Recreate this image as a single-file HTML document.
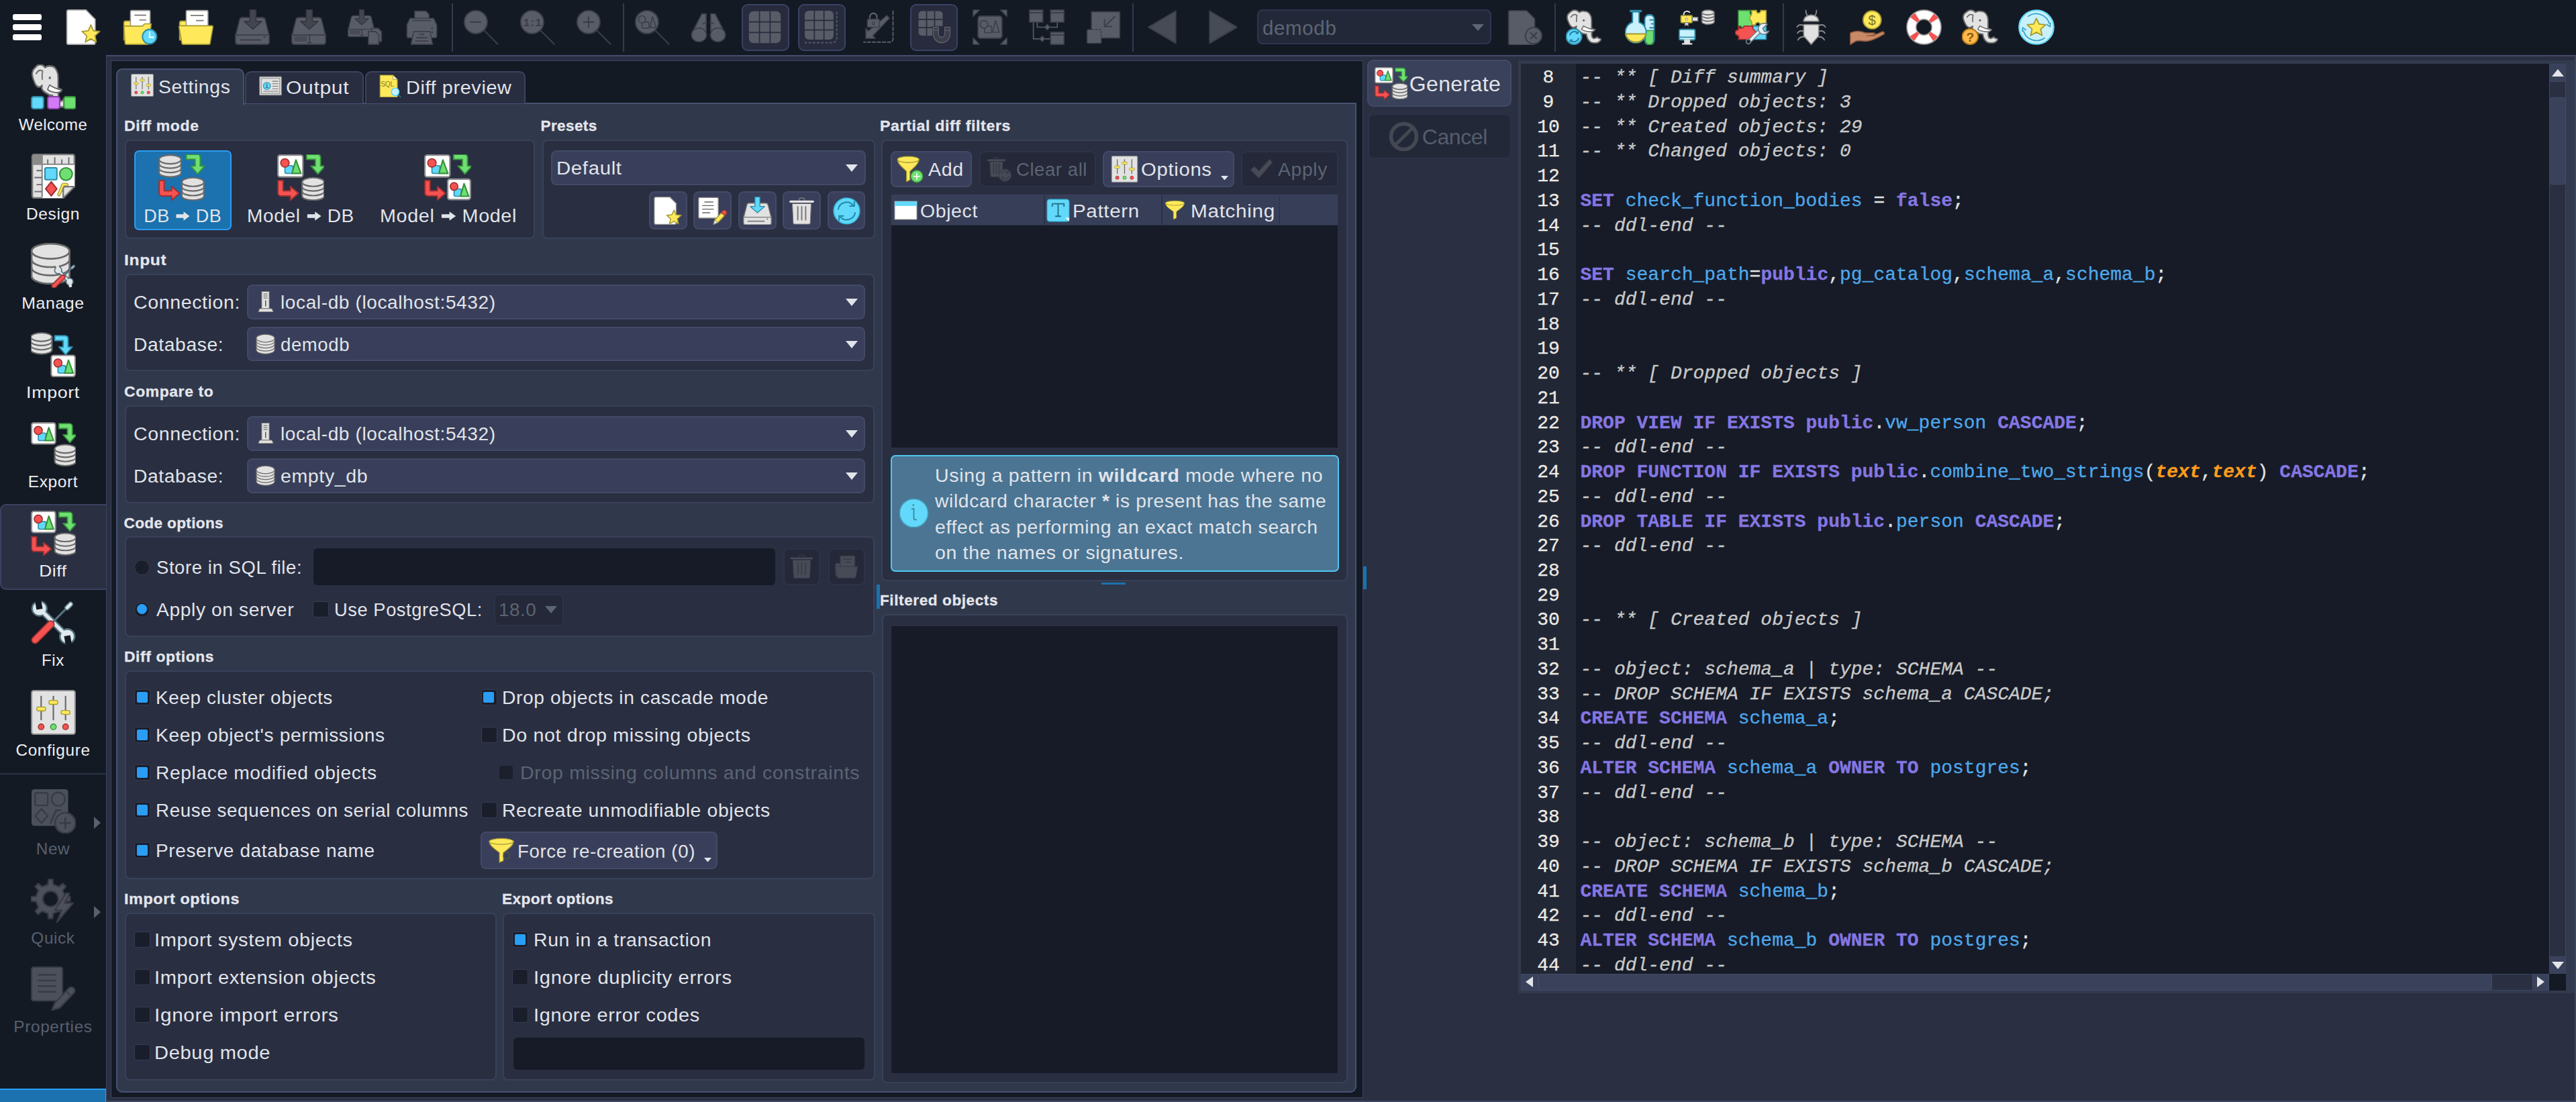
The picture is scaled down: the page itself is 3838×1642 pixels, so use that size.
<!DOCTYPE html><html><head><meta charset="utf-8"><title>pgModeler</title><style>
*{box-sizing:border-box;margin:0;padding:0}
html,body{width:3838px;height:1642px;overflow:hidden;background:#141a24}
body{position:relative;font-family:"Liberation Sans",sans-serif;font-size:27px;color:#e1e4ea;letter-spacing:.6px}
div,svg.ic{position:absolute}
.t{white-space:pre}
.s{font-size:24px;letter-spacing:.3px}
.h{font-size:22.6px;font-weight:700;-webkit-text-stroke:.3px;letter-spacing:0;white-space:pre;color:#e4e6ec}
.dis{color:#5b6473}
.gb{background:#292e41;border:2px solid #394159;border-radius:8px}
.combo{background:#393f5a;border:2px solid #424a66;border-radius:8px}
.dark{background:#171b27;border-radius:6px}
.btn{background:#393f5a;border:2px solid #424a66;border-radius:8px}
.btnd{background:#242838;border:2px solid #2d3348;border-radius:8px}
.cb{width:24px;height:24px;background:#1a1e2b;border:1.5px solid #363c54;border-radius:4px}
.cb.on::after{content:"";position:absolute;left:2.5px;top:2.5px;width:16px;height:16px;background:#2a9df4;border-radius:2px}
.cb.d{border-color:#2b3044;background:#1c202d}
.rb{width:23px;height:23px;background:#1a1e2b;border:1.5px solid #363c54;border-radius:50%}
.rb.on::after{content:"";position:absolute;left:2.5px;top:2.5px;width:15px;height:15px;background:#2a9df4;border-radius:50%}
.arr{width:0;height:0;border-left:9px solid transparent;border-right:9px solid transparent;border-top:11px solid #e1e4ea}
.m{font-family:"Liberation Mono",monospace;font-size:28px;letter-spacing:0;white-space:pre;-webkit-text-stroke:.3px}

.k{color:#8576e2}.i{color:#4ea8ec}.c{color:#c9c9c9}.ty{color:#ff9d1c}
</style></head><body><svg width="0" height="0" style="position:absolute"><defs><symbol id="i-new" viewBox="0 0 64 64"><path d="M2 4a3 3 0 0 1 3-3h32l17 17v42a3 3 0 0 1 -3 3H5a3 3 0 0 1 -3-3z" fill="#fff" stroke="#a8a8a8" stroke-width="2"/><polygon points="46.0,28.0 50.7,38.5 62.2,39.7 53.6,47.5 56.0,58.8 46.0,53.0 36.0,58.8 38.4,47.5 29.8,39.7 41.3,38.5" fill="#ffe95a" stroke="#a39a35" stroke-width="2.2" stroke-linejoin="round"/></symbol><symbol id="i-recent" viewBox="0 0 64 64"><path d="M2 24a3 3 0 0 1 3-3h14l5 5h22a3 3 0 0 1 3 3v26H2z" fill="#ffe95a" stroke="#a39a35" stroke-width="2" stroke-linejoin="round"/><rect x="14" y="2" width="36" height="34" rx="2" fill="#fff" stroke="#9a9a9a" stroke-width="2"/><path d="M21.2 10.5h21.599999999999998M30.2 19.0h12.6" stroke="#777" stroke-width="2"/><path d="M2 30h34l4-4h12l-4 34a3 3 0 0 1 -3 3H7a3 3 0 0 1 -3 -3z" fill="#ffe95a" stroke="#a39a35" stroke-width="2" stroke-linejoin="round"/><circle cx="49" cy="49" r="13" fill="#62d8fa" stroke="#2d8ca8" stroke-width="2.4"/><path d="M49 40v10h8" fill="none" stroke="#fff" stroke-width="2.4"/></symbol><symbol id="i-open" viewBox="0 0 64 64"><path d="M2 24a3 3 0 0 1 3-3h14l5 5h22a3 3 0 0 1 3 3v26H2z" fill="#ffe95a" stroke="#a39a35" stroke-width="2" stroke-linejoin="round"/><rect x="14" y="2" width="40" height="36" rx="2" fill="#fff" stroke="#9a9a9a" stroke-width="2"/><path d="M22.0 11.0h24.0M32.0 20.0h14.0" stroke="#777" stroke-width="2"/><path d="M1 32a2 2 0 0 1 2-2.5h58a2 2 0 0 1 2 2.5l-5 28a3 3 0 0 1 -3 3H9a3 3 0 0 1 -3 -3z" fill="#ffe95a" stroke="#a39a35" stroke-width="2" stroke-linejoin="round"/></symbol><symbol id="i-save" viewBox="0 0 64 64"><rect x="1" y="42" width="62" height="21" rx="4" fill="#585c67" stroke="#3b3e48" stroke-width="2"/><path d="M1.5 46L8.5 18.6a5 5 0 0 1 5-4h37a5 5 0 0 1 5 4L62.5 46z" fill="#585c67" stroke="#3b3e48" stroke-width="2" stroke-linejoin="round"/><path d="M27.5 0.5h11v21.0h10.5l-16 14.0l-16 -14.0h10.5z" fill="#43464f" stroke="#33363f" stroke-width="2" stroke-linejoin="round"/><path d="M10 55h38" stroke="#3b3e48" stroke-width="2.5"/><circle cx="54" cy="50" r="1.6" fill="#3b3e48"/></symbol><symbol id="i-saveas" viewBox="0 0 64 64"><rect x="1" y="42" width="62" height="21" rx="4" fill="#585c67" stroke="#3b3e48" stroke-width="2"/><path d="M1.5 46L8.5 18.6a5 5 0 0 1 5-4h37a5 5 0 0 1 5 4L62.5 46z" fill="#585c67" stroke="#3b3e48" stroke-width="2" stroke-linejoin="round"/><path d="M27.5 0.5h11v21.0h10.5l-16 14.0l-16 -14.0h10.5z" fill="#43464f" stroke="#33363f" stroke-width="2" stroke-linejoin="round"/><rect x="5" y="48" width="24" height="10" fill="#484b55"/><path d="M29.5 46h8M29.5 60h8M33.5 46v14" stroke="#3b3e48" stroke-width="2.2"/></symbol><symbol id="i-saveall" viewBox="0 0 64 64"><g transform="scale(.78)"><rect x="1" y="42" width="62" height="21" rx="4" fill="#585c67" stroke="#3b3e48" stroke-width="2"/><path d="M1.5 46L8.5 18.6a5 5 0 0 1 5-4h37a5 5 0 0 1 5 4L62.5 46z" fill="#585c67" stroke="#3b3e48" stroke-width="2" stroke-linejoin="round"/><path d="M27.5 0.5h11v21.0h10.5l-16 14.0l-16 -14.0h10.5z" fill="#43464f" stroke="#33363f" stroke-width="2" stroke-linejoin="round"/><rect x="5" y="48" width="24" height="10" fill="#484b55"/><path d="M29.5 46h8M29.5 60h8M33.5 46v14" stroke="#3b3e48" stroke-width="2.2"/></g><path d="M44 34h12l6 6v18H44z" fill="#585c67" stroke="#3b3e48" stroke-width="2"/><path d="M38 40h13l6 6v17H38z" fill="#585c67" stroke="#3b3e48" stroke-width="2"/></symbol><symbol id="i-print" viewBox="0 0 64 64"><path d="M18 20V3h22l6 6v11z" fill="#585c67" stroke="#3b3e48" stroke-width="2" stroke-linejoin="round"/><path d="M3 28l6-12h46l6 12v20a3 3 0 0 1 -3 3H6a3 3 0 0 1 -3 -3z" fill="#585c67" stroke="#3b3e48" stroke-width="2" stroke-linejoin="round"/><path d="M14 20h36" stroke="#3b3e48" stroke-width="2"/><circle cx="52" cy="34" r="1.8" fill="#3b3e48"/><circle cx="52" cy="41" r="1.8" fill="#3b3e48"/><path d="M16 40h32l5 23H11z" fill="#585c67" stroke="#3b3e48" stroke-width="2" stroke-linejoin="round"/><path d="M27 45h10M21 51h22M19 57h26" stroke="#3b3e48" stroke-width="2.2"/></symbol><symbol id="i-zout" viewBox="0 0 64 64"><path d="M30 30L63 63" stroke="#3b3e48" stroke-width="2.6"/><circle cx="22" cy="22" r="21" fill="#585c67" stroke="#3b3e48" stroke-width="2.4"/><path d="M12 22h20" stroke="#3b3e48" stroke-width="2.6"/></symbol><symbol id="i-z11" viewBox="0 0 64 64"><path d="M30 30L63 63" stroke="#3b3e48" stroke-width="2.6"/><circle cx="22" cy="22" r="21" fill="#585c67" stroke="#3b3e48" stroke-width="2.4"/><text x="22" y="30" text-anchor="middle" font-family="Liberation Mono" font-weight="700" font-size="20" letter-spacing="-1" fill="#3b3e48">1:1</text></symbol><symbol id="i-zin" viewBox="0 0 64 64"><path d="M30 30L63 63" stroke="#3b3e48" stroke-width="2.6"/><circle cx="22" cy="22" r="21" fill="#585c67" stroke="#3b3e48" stroke-width="2.4"/><path d="M12 22h20M22 12v20" stroke="#3b3e48" stroke-width="2.6"/></symbol><symbol id="i-zobj" viewBox="0 0 64 64"><path d="M30 30L63 63" stroke="#3b3e48" stroke-width="2.6"/><circle cx="22" cy="22" r="21" fill="#585c67" stroke="#3b3e48" stroke-width="2.4"/><rect x="13" y="22" width="13" height="11" rx="2" fill="#585c67" stroke="#3b3e48" stroke-width="2"/><circle cx="13" cy="17" r="6.5" fill="#585c67" stroke="#3b3e48" stroke-width="2"/><path d="M32 12l7 20H28z" fill="#585c67" stroke="#3b3e48" stroke-width="2" stroke-linejoin="round"/></symbol><symbol id="i-bino" viewBox="0 0 64 64"><path d="M20 6h8v34H4z" fill="#585c67" stroke="#3b3e48" stroke-width="2" stroke-linejoin="round"/><path d="M36 6h8l16 34H36z" fill="#585c67" stroke="#3b3e48" stroke-width="2" stroke-linejoin="round"/><circle cx="15" cy="47" r="13.5" fill="#585c67" stroke="#3b3e48" stroke-width="2"/><circle cx="49" cy="47" r="13.5" fill="#585c67" stroke="#3b3e48" stroke-width="2"/><path d="M22 26c4-5 16-5 20 0" fill="none" stroke="#3b3e48" stroke-width="2.2"/><path d="M32 8v30" stroke="#141a24" stroke-width="4"/></symbol><symbol id="i-grid" viewBox="0 0 64 64"><rect x="1" y="1" width="62" height="62" rx="9" fill="#585c67"/><path d="M21.666666666666664 1v62M1 21.666666666666664h62" stroke="#272b3d" stroke-width="2.2"/><path d="M42.33333333333333 1v62M1 42.33333333333333h62" stroke="#272b3d" stroke-width="2.2"/></symbol><symbol id="i-gridd" viewBox="0 0 64 64"><rect x="0" y="0" width="55" height="55" rx="8" fill="#585c67"/><path d="M18.333333333333332 0v55M0 18.333333333333332h55" stroke="#272b3d" stroke-width="2.2"/><path d="M36.666666666666664 0v55M0 36.666666666666664h55" stroke="#272b3d" stroke-width="2.2"/><path d="M61 2v50a9 9 0 0 1 -9 9H0" fill="none" stroke="#585c67" stroke-width="2.2" stroke-dasharray="5 3"/></symbol><symbol id="i-lockarr" viewBox="0 0 64 64"><path d="M62 2v52a6 6 0 0 1 -6 6H4" fill="none" stroke="#585c67" stroke-width="2.6" stroke-dasharray="6 4" stroke-linecap="round"/><path d="M50 10l5 5L22 48l5 5H8V34l5 5z" fill="#585c67" stroke="#3b3e48" stroke-width="2" stroke-linejoin="round"/><path d="M16 18v-5a7 7 0 0 1 14 0v5" fill="none" stroke="#585c67" stroke-width="3"/><rect x="11" y="17" width="24" height="15" rx="2" fill="#585c67" stroke="#3b3e48" stroke-width="2"/><circle cx="23" cy="24.5" r="2.5" fill="none" stroke="#3b3e48" stroke-width="1.6"/></symbol><symbol id="i-gridmag" viewBox="0 0 64 64"><rect x="2" y="2" width="46" height="46" rx="6" fill="#585c67"/><path d="M17.333333333333332 2v46M2 17.333333333333332h46" stroke="#272b3d" stroke-width="2.2"/><path d="M32.666666666666664 2v46M2 32.666666666666664h46" stroke="#272b3d" stroke-width="2.2"/><rect x="28" y="30" width="36" height="34" fill="#272b3d"/><path d="M30 32h10v13a6 6 0 0 0 12 0V32h10v13a16 16 0 0 1 -32 0z" fill="#3b3e48" stroke="#585c67" stroke-width="2" stroke-linejoin="round"/><path d="M30 38h10M52 38h10" stroke="#585c67" stroke-width="2"/></symbol><symbol id="i-fit" viewBox="0 0 64 64"><rect x="10" y="12" width="44" height="40" rx="5" fill="#585c67" stroke="#3b3e48" stroke-width="2.4"/><rect x="22" y="30" width="13" height="12" rx="2" fill="#585c67" stroke="#3b3e48" stroke-width="2"/><circle cx="21" cy="27" r="7" fill="#585c67" stroke="#3b3e48" stroke-width="2"/><path d="M42 20l7 21H37z" fill="#585c67" stroke="#3b3e48" stroke-width="2" stroke-linejoin="round"/><path d="M1 1h12L1 13zM63 1v12L51 1zM1 63V51l12 12zM63 63H51l12-12z" fill="#585c67" stroke="#3b3e48" stroke-width="1.6" stroke-linejoin="round"/></symbol><symbol id="i-rels" viewBox="0 0 64 64"><path d="M15 24v8h36v-8M8 24v29h32" fill="none" stroke="#585c67" stroke-width="2"/><rect x="1" y="1" width="24" height="22" fill="#585c67" stroke="#3b3e48" stroke-width="2"/><path d="M1 6h24" stroke="#3b3e48" stroke-width="2.4"/><rect x="39" y="1" width="24" height="22" fill="#585c67" stroke="#3b3e48" stroke-width="2"/><path d="M39 6h24" stroke="#3b3e48" stroke-width="2.4"/><rect x="39" y="41" width="24" height="22" fill="#585c67" stroke="#3b3e48" stroke-width="2"/><path d="M39 46h24" stroke="#3b3e48" stroke-width="2.4"/><path d="M33 27l5 5l-5 5l-5-5zM24 48l5 5l-5 5l-5-5z" fill="#585c67" stroke="#3b3e48" stroke-width="1.6"/></symbol><symbol id="i-compact" viewBox="0 0 64 64"><rect x="10" y="2" width="52" height="50" fill="#585c67" stroke="#3b3e48" stroke-width="2"/><path d="M54 10L36 28M34 16v14h14" fill="none" stroke="#3b3e48" stroke-width="2.4"/><rect x="2" y="36" width="26" height="26" rx="2" fill="#585c67" stroke="#3b3e48" stroke-width="2" stroke-dasharray="4 2.5"/></symbol><symbol id="i-left" viewBox="0 0 64 64"><path d="M61 3v58L3 32z" fill="#474b56" stroke="#3b3e48" stroke-width="2.4" stroke-linejoin="round"/></symbol><symbol id="i-right" viewBox="0 0 64 64"><path d="M3 3v58L61 32z" fill="#474b56" stroke="#3b3e48" stroke-width="2.4" stroke-linejoin="round"/></symbol><symbol id="i-filex" viewBox="0 0 64 64"><path d="M2 4a3 3 0 0 1 3-3h30l15 15v45a3 3 0 0 1 -3 3H5a3 3 0 0 1 -3-3z" fill="#585c67" stroke="#3b3e48" stroke-width="2"/><circle cx="48" cy="47" r="15" fill="#585c67" stroke="#3b3e48" stroke-width="2.4"/><path d="M42 41l12 12M54 41l-12 12" stroke="#3b3e48" stroke-width="2.6"/></symbol><symbol id="i-elesync" viewBox="0 0 64 64"><g transform="translate(0 1)"><path d="M13.5 .5C18-.5 22 2 24 4.3C27 2.5 30 2 32.5 2.2C37 2.2 41 4 43 7.5C45.5 11 46.2 14 46.2 18L46.2 33L52.5 35.6C51 38 49 39 46.5 39.5L46.5 45C46.5 49 49 52 51.5 51C53.5 50.5 55 49.5 56.3 48.5L58 50.5L63.5 52.4C62 57 57 59.5 53.5 59.5C50 59.5 46 59 43.7 57.3C40 54.5 38.5 51 38 48.9L36.7 43.3C33 43.5 30 42.5 28.3 41.2C23 39 19.5 36.5 18.4 33.5L19.1 29.3C16.5 31.5 14 32 12.1 31.4C9.5 30.5 7.5 28 6.5 25.7C4.5 22 2.8 18 2.3 14.5C2 10 4.5 6 7.9 4C9.5 2 11.5 1 13.5 .5Z" fill="#e2e2e2" stroke="#6a6a6a" stroke-width="2.4" stroke-linejoin="round"/><path d="M9 12.8C11 10 13 8.5 15 8.2C17 8 19 8.5 19.9 9.6C19 13 18.8 17 19.2 20.8" fill="none" stroke="#6a6a6a" stroke-width="2" stroke-linecap="round"/><circle cx="32.1" cy="18.7" r="1.9" fill="#666"/><path d="M31.8 28.6C37 32 44 34.5 52.3 35.3C50 38.5 46 39.6 42 39.2C36 38.5 31 37 28.3 34.9Z" fill="#fff" stroke="#6a6a6a" stroke-width="1.8" stroke-linejoin="round"/></g><circle cx="14.6" cy="49" r="14" fill="#62d8fa" stroke="#2d8ca8" stroke-width="2.4"/><path d="M7 47a8.5 8.5 0 0 1 15-4M23 51a8.5 8.5 0 0 1 -15 4" fill="none" stroke="#1f7fa0" stroke-width="2.4"/><path d="M23 38v6h-6zM7 60v-6h6z" fill="#1f7fa0"/></symbol><symbol id="i-flask" viewBox="0 0 64 64"><rect x="42" y="10" width="20" height="53" rx="8" fill="#c8f1fc" stroke="#2d8ca8" stroke-width="2.8"/><path d="M43.5 38h17v17a8 8 0 0 1 -17 0z" fill="#6ee071" stroke="#38923d" stroke-width="2"/><path d="M52 19h9M55 26h6M52 33h9" stroke="#2d8ca8" stroke-width="2.6"/><path d="M16 4v19a22 19 0 1 0 14 0V4z" fill="#c8f1fc" stroke="#2d8ca8" stroke-width="2.8" stroke-linejoin="round"/><path d="M1.5 44h43a22 19 0 0 1 -43 0z" fill="#ffe95a" stroke="#a39a35" stroke-width="2.4"/><path d="M12 3h22" stroke="#2d8ca8" stroke-width="4.4" stroke-linecap="round"/></symbol><symbol id="i-conn" viewBox="0 0 64 64"><path d="M41.0 5.4v17.200000000000003a11.0 4.4 0 0 0 22 0v-17.200000000000003z" fill="#e2e2e2" stroke="#6a6a6a" stroke-width="2"/><path d="M41.0 11.133333333333335a11.0 4.4 0 0 0 22 0" fill="none" stroke="#6a6a6a" stroke-width="2"/><path d="M41.0 16.866666666666667a11.0 4.4 0 0 0 22 0" fill="none" stroke="#6a6a6a" stroke-width="2"/><ellipse cx="52" cy="5.4" rx="11.0" ry="4.4" fill="#e2e2e2" stroke="#6a6a6a" stroke-width="2"/><path d="M9 14v-5a6 6 0 0 1 11-3" fill="none" stroke="#e2e2e2" stroke-width="2.4"/><rect x="4" y="11" width="20" height="13" rx="2" fill="#ffe95a" stroke="#a39a35" stroke-width="2"/><circle cx="14" cy="17.5" r="2" fill="#fff" stroke="#a39a35" stroke-width="1.2"/><path d="M24 14h10v7H24z" fill="#e2e2e2" stroke="#6a6a6a" stroke-width="1.6"/><path d="M11 24h6v6l-3-2l-3 2z" fill="#e2e2e2" stroke="#6a6a6a" stroke-width="1.2"/><rect x="1" y="36" width="28" height="19" rx="3" fill="#c8f1fc" stroke="#2d8ca8" stroke-width="2.4"/><path d="M1 50h28" stroke="#2d8ca8" stroke-width="2"/><path d="M11 55h8v5h-8zM6 62h18" stroke="#e2e2e2" stroke-width="2.6" fill="#e2e2e2"/></symbol><symbol id="i-puzzle" viewBox="0 0 64 64"><path d="M6 2h22c-3 5 0 9 4 9v19H20c0 5-8 6-9 0H6z" fill="#6ee071" stroke="#38923d" stroke-width="2" stroke-linejoin="round"/><path d="M30 2h9c-2 6 8 6 7 0h10v26H45c1-6-9-6-8 0h-7c2-6-3-9-4-12c0-3 4-5 4-8z" fill="#ffe95a" stroke="#a39a35" stroke-width="2" stroke-linejoin="round"/><path d="M32 30h24v24H32z" fill="#62d8fa" stroke="#2d8ca8" stroke-width="2" stroke-linejoin="round"/><path d="M6 30c2 6 9 5 10 0h16c-3 6 6 8 6 13c0 4-6 4-6 11H6c2-5 1-7-3-8c-4-2-3-9 3-9z" fill="#f55252" stroke="#9d3030" stroke-width="2" stroke-linejoin="round"/><path d="M25 58L47 36" stroke="#6b7d86" stroke-width="8" stroke-linecap="round"/><path d="M25 58L47 36" stroke="#e6eef2" stroke-width="4.5" stroke-linecap="round"/><path d="M58 27a10 10 0 1 0 3 12l-8 1l-3-6z" fill="#e6eef2" stroke="#6b7d86" stroke-width="2" stroke-linejoin="round"/><circle cx="24" cy="58" r="4" fill="#141a24" stroke="#6b7d86" stroke-width="2"/></symbol><symbol id="i-bug" viewBox="0 0 64 64"><path d="M22 2c0 8 2 11 6 13M42 2c0 8-2 11-6 13" fill="none" stroke="#8a8a8a" stroke-width="2.2"/><path d="M18 22a14 11 0 0 1 28 0z" fill="#e2e2e2" stroke="#8a8a8a" stroke-width="2"/><path d="M18 28h28v20l-14 15l-14-15z" fill="#e2e2e2" stroke="#8a8a8a" stroke-width="2" stroke-linejoin="round"/><path d="M18 30c-6-3-10-2-13 3M18 40c-6-2-10 0-12 4M19 50c-6-1-10 1-12 6M46 30c6-3 10-2 13 3M46 40c6-2 10 0 12 4M45 50c6-1 10 1 12 6" fill="none" stroke="#8a8a8a" stroke-width="2.2"/></symbol><symbol id="i-donate" viewBox="0 0 64 64"><circle cx="41" cy="18" r="16.5" fill="#ffe95a" stroke="#a39a35" stroke-width="2.4"/><text x="41" y="27" text-anchor="middle" font-family="Liberation Sans" font-size="25" fill="#7a7325">$</text><path d="M1 42c8-4 18-4 28 0h14c4 0 4 5 0 5h-12c10 1 22-4 28-7c4-1 6 3 2 5c-10 6-22 12-32 12c-8 0-12-2-18 0l-10 6z" fill="#c98a68" stroke="#8f5c40" stroke-width="2" stroke-linejoin="round"/></symbol><symbol id="i-buoy" viewBox="0 0 64 64"><circle cx="32" cy="32" r="22.5" fill="none" stroke="#8a8a8a" stroke-width="19"/><circle cx="32" cy="32" r="22.5" fill="none" stroke="#fff" stroke-width="15"/><circle cx="32" cy="32" r="22.5" fill="none" stroke="#f55252" stroke-width="15" stroke-dasharray="8.4 26.94" stroke-dashoffset="-13.5"/></symbol><symbol id="i-elehelp" viewBox="0 0 64 64"><g transform="translate(0 1)"><path d="M13.5 .5C18-.5 22 2 24 4.3C27 2.5 30 2 32.5 2.2C37 2.2 41 4 43 7.5C45.5 11 46.2 14 46.2 18L46.2 33L52.5 35.6C51 38 49 39 46.5 39.5L46.5 45C46.5 49 49 52 51.5 51C53.5 50.5 55 49.5 56.3 48.5L58 50.5L63.5 52.4C62 57 57 59.5 53.5 59.5C50 59.5 46 59 43.7 57.3C40 54.5 38.5 51 38 48.9L36.7 43.3C33 43.5 30 42.5 28.3 41.2C23 39 19.5 36.5 18.4 33.5L19.1 29.3C16.5 31.5 14 32 12.1 31.4C9.5 30.5 7.5 28 6.5 25.7C4.5 22 2.8 18 2.3 14.5C2 10 4.5 6 7.9 4C9.5 2 11.5 1 13.5 .5Z" fill="#e2e2e2" stroke="#6a6a6a" stroke-width="2.4" stroke-linejoin="round"/><path d="M9 12.8C11 10 13 8.5 15 8.2C17 8 19 8.5 19.9 9.6C19 13 18.8 17 19.2 20.8" fill="none" stroke="#6a6a6a" stroke-width="2" stroke-linecap="round"/><circle cx="32.1" cy="18.7" r="1.9" fill="#666"/><path d="M31.8 28.6C37 32 44 34.5 52.3 35.3C50 38.5 46 39.6 42 39.2C36 38.5 31 37 28.3 34.9Z" fill="#fff" stroke="#6a6a6a" stroke-width="1.8" stroke-linejoin="round"/></g><circle cx="14.6" cy="49" r="14" fill="#ffb84d" stroke="#b07614" stroke-width="2.4"/><text x="15" y="58" text-anchor="middle" font-family="Liberation Sans" font-weight="700" font-size="23" fill="#8a5a0c">?</text></symbol><symbol id="i-starc" viewBox="0 0 64 64"><circle cx="32" cy="32" r="30.5" fill="#c8f1fc" stroke="#62d8fa" stroke-width="2.6"/><path d="M9 38a24 24 0 0 0 38 13M55 26a24 24 0 0 0 -38-13" fill="none" stroke="#3ba6c6" stroke-width="2.2"/><path d="M7 40l1-7l6 4M57 24l-1 7l-6-4" fill="none" stroke="#3ba6c6" stroke-width="2.2"/><polygon points="32.0,16.0 36.7,26.5 48.2,27.7 39.6,35.5 42.0,46.8 32.0,41.0 22.0,46.8 24.4,35.5 15.8,27.7 27.3,26.5" fill="#ffe95a" stroke="#a39a35" stroke-width="2.2" stroke-linejoin="round"/></symbol><symbol id="s-welcome" viewBox="0 0 64 64"><g transform="scale(.84 1.02)"><path d="M13.5 .5C18-.5 22 2 24 4.3C27 2.5 30 2 32.5 2.2C37 2.2 41 4 43 7.5C45.5 11 46.2 14 46.2 18L46.2 33L52.5 35.6C51 38 49 39 46.5 39.5L46.5 45C46.5 49 49 52 51.5 51C53.5 50.5 55 49.5 56.3 48.5L58 50.5L63.5 52.4C62 57 57 59.5 53.5 59.5C50 59.5 46 59 43.7 57.3C40 54.5 38.5 51 38 48.9L36.7 43.3C33 43.5 30 42.5 28.3 41.2C23 39 19.5 36.5 18.4 33.5L19.1 29.3C16.5 31.5 14 32 12.1 31.4C9.5 30.5 7.5 28 6.5 25.7C4.5 22 2.8 18 2.3 14.5C2 10 4.5 6 7.9 4C9.5 2 11.5 1 13.5 .5Z" fill="#e2e2e2" stroke="#6a6a6a" stroke-width="2.4" stroke-linejoin="round"/><path d="M9 12.8C11 10 13 8.5 15 8.2C17 8 19 8.5 19.9 9.6C19 13 18.8 17 19.2 20.8" fill="none" stroke="#6a6a6a" stroke-width="2" stroke-linecap="round"/><circle cx="32.1" cy="18.7" r="1.9" fill="#666"/><path d="M31.8 28.6C37 32 44 34.5 52.3 35.3C50 38.5 46 39.6 42 39.2C36 38.5 31 37 28.3 34.9Z" fill="#fff" stroke="#6a6a6a" stroke-width="1.8" stroke-linejoin="round"/></g><rect x="1" y="46" width="17" height="17" rx="3" fill="#62d8fa" stroke="#2d8ca8" stroke-width="2"/><rect x="24" y="46" width="17" height="17" rx="3" fill="#d47af7" stroke="#8a45a8" stroke-width="2"/><rect x="47" y="46" width="17" height="17" rx="3" fill="#6ee071" stroke="#38923d" stroke-width="2"/></symbol><symbol id="s-design" viewBox="0 0 64 64"><path d="M2 4a3 3 0 0 1 3-3h54a3 3 0 0 1 3 3v42L46 63H5a3 3 0 0 1 -3-3z" fill="#e2e2e2" stroke="#777" stroke-width="2.4" stroke-linejoin="round"/><rect x="16" y="15" width="46" height="31" fill="#fff"/><path d="M16 46h30v17H16z" fill="#fff"/><path d="M16 2v60M2 15h60" stroke="#888" stroke-width="2"/><rect x="3" y="2" width="13" height="13" fill="#8a8a8a"/><path d="M24 8v7M34 5v10M44 8v7M54 5v10M8 24h8M5 34h11M8 44h8M5 54h11" stroke="#777" stroke-width="2"/><rect x="20" y="20" width="17" height="17" rx="2" fill="#62d8fa" stroke="#2d8ca8" stroke-width="2"/><circle cx="50" cy="29" r="9" fill="#6ee071" stroke="#38923d" stroke-width="2"/><path d="M29 40l8 10l-8 10l-8-10z" fill="#f55252" stroke="#9d3030" stroke-width="2" stroke-linejoin="round"/><path d="M40 58l6-14h5" fill="none" stroke="#a39a35" stroke-width="5" stroke-linecap="round" stroke-linejoin="round"/><path d="M40 58l6-14h5" fill="none" stroke="#ffe95a" stroke-width="2.4" stroke-linecap="round" stroke-linejoin="round"/><path d="M46 63V50a3 3 0 0 1 3-3h13z" fill="#e2e2e2" stroke="#777" stroke-width="2.2" stroke-linejoin="round"/></symbol><symbol id="s-import" viewBox="0 0 64 64"><path d="M0.0 7.0v18.0a15.0 6.0 0 0 0 30 0v-18.0z" fill="#e2e2e2" stroke="#6a6a6a" stroke-width="2"/><path d="M0.0 13.0a15.0 6.0 0 0 0 30 0" fill="none" stroke="#6a6a6a" stroke-width="2"/><path d="M0.0 19.0a15.0 6.0 0 0 0 30 0" fill="none" stroke="#6a6a6a" stroke-width="2"/><ellipse cx="15" cy="7.0" rx="15.0" ry="6.0" fill="#e2e2e2" stroke="#6a6a6a" stroke-width="2"/><path transform="translate(34 5) scale(1.0)" d="M0 0h15a4 4 0 0 1 4 4v12h6l-9.5 11l-9.5 -11h6v-9h-12z" fill="#62d8fa" stroke="#2d8ca8" stroke-width="1.8" stroke-linejoin="round"/><rect x="29" y="33" width="34" height="30" rx="3" fill="#fff" stroke="#8a8a8a" stroke-width="2"/><rect x="38.52" y="47.4" width="10.88" height="10.799999999999999" rx="2" fill="#62d8fa" stroke="#2d8ca8" stroke-width="1.5"/><circle cx="38.52" cy="43.8" r="5.78" fill="#f55252" stroke="#9d3030" stroke-width="1.5"/><path d="M53.480000000000004 39.6l6.800000000000001 18.6h-12.24z" fill="#6ee071" stroke="#38923d" stroke-width="2" stroke-linejoin="round"/></symbol><symbol id="s-export" viewBox="0 0 64 64"><rect x="1" y="2" width="34" height="30" rx="3" fill="#fff" stroke="#8a8a8a" stroke-width="2"/><rect x="10.520000000000001" y="16.4" width="10.88" height="10.799999999999999" rx="2" fill="#62d8fa" stroke="#2d8ca8" stroke-width="1.5"/><circle cx="10.520000000000001" cy="12.799999999999999" r="5.78" fill="#f55252" stroke="#9d3030" stroke-width="1.5"/><path d="M25.48 8.6l6.800000000000001 18.6h-12.24z" fill="#6ee071" stroke="#38923d" stroke-width="2" stroke-linejoin="round"/><path transform="translate(40 3) scale(1.0)" d="M0 0h15a4 4 0 0 1 4 4v12h6l-9.5 11l-9.5 -11h6v-9h-12z" fill="#6ee071" stroke="#38923d" stroke-width="1.8" stroke-linejoin="round"/><path d="M34.0 39.0v18.0a15.0 6.0 0 0 0 30 0v-18.0z" fill="#e2e2e2" stroke="#6a6a6a" stroke-width="2"/><path d="M34.0 45.0a15.0 6.0 0 0 0 30 0" fill="none" stroke="#6a6a6a" stroke-width="2"/><path d="M34.0 51.0a15.0 6.0 0 0 0 30 0" fill="none" stroke="#6a6a6a" stroke-width="2"/><ellipse cx="49" cy="39.0" rx="15.0" ry="6.0" fill="#e2e2e2" stroke="#6a6a6a" stroke-width="2"/></symbol><symbol id="s-diff" viewBox="0 0 64 64"><rect x="1" y="1" width="34" height="30" rx="3" fill="#fff" stroke="#8a8a8a" stroke-width="2"/><rect x="10.520000000000001" y="15.399999999999999" width="10.88" height="10.799999999999999" rx="2" fill="#62d8fa" stroke="#2d8ca8" stroke-width="1.5"/><circle cx="10.520000000000001" cy="11.799999999999999" r="5.78" fill="#f55252" stroke="#9d3030" stroke-width="1.5"/><path d="M25.48 7.6l6.800000000000001 18.6h-12.24z" fill="#6ee071" stroke="#38923d" stroke-width="2" stroke-linejoin="round"/><path transform="translate(40 2) scale(1.0)" d="M0 0h15a4 4 0 0 1 4 4v12h6l-9.5 11l-9.5 -11h6v-9h-12z" fill="#6ee071" stroke="#38923d" stroke-width="1.8" stroke-linejoin="round"/><path transform="translate(1 37) scale(1.0)" d="M0 0h7v14h10v-6l11 9.5l-11 9.5v-6h-13a4 4 0 0 1 -4 -4z" fill="#f55252" stroke="#9d3030" stroke-width="1.8" stroke-linejoin="round"/><path d="M34.0 38.0v19.0a15.0 6.0 0 0 0 30 0v-19.0z" fill="#e2e2e2" stroke="#6a6a6a" stroke-width="2"/><path d="M34.0 44.333333333333336a15.0 6.0 0 0 0 30 0" fill="none" stroke="#6a6a6a" stroke-width="2"/><path d="M34.0 50.666666666666664a15.0 6.0 0 0 0 30 0" fill="none" stroke="#6a6a6a" stroke-width="2"/><ellipse cx="49" cy="38.0" rx="15.0" ry="6.0" fill="#e2e2e2" stroke="#6a6a6a" stroke-width="2"/></symbol><symbol id="s-fix" viewBox="0 0 64 64"><g transform="translate(32 32) rotate(45)"><rect x="-28" y="-3.5" width="56" height="7" fill="#dfe9ee" stroke="#54727e" stroke-width="2.2"/><circle cx="-28" cy="0" r="10.5" fill="#dfe9ee" stroke="#54727e" stroke-width="2.2"/><circle cx="28" cy="0" r="10.5" fill="#dfe9ee" stroke="#54727e" stroke-width="2.2"/><rect x="-19.6" y="-2.4" width="10.5" height="4.8" fill="#dfe9ee"/><rect x="9.099999999999998" y="-2.4" width="10.5" height="4.8" fill="#dfe9ee"/><rect x="-41.5" y="-4.41" width="14.5" height="8.82" fill="#141a24" transform="rotate(35 -28 0)"/><rect x="27" y="-4.41" width="14.5" height="8.82" fill="#141a24" transform="rotate(35 28 0)"/></g><path d="M51.45 11.100000000000001L28.22 34.56" stroke="#54727e" stroke-width="3" stroke-linecap="round"/><path d="M56.5 6L51.45 11.100000000000001" stroke="#54727e" stroke-width="7.6" stroke-linecap="round"/><path d="M56.5 6L51.45 11.100000000000001" stroke="#dfe9ee" stroke-width="4.3999999999999995" stroke-linecap="round"/><path d="M28.22 34.56L6 57" stroke="#9d3030" stroke-width="11.2" stroke-linecap="round"/><path d="M28.22 34.56L6 57" stroke="#f55252" stroke-width="8" stroke-linecap="round"/></symbol><symbol id="s-manage" viewBox="0 0 64 64"><path d="M1.0 11.8v35.400000000000006a27.0 10.8 0 0 0 54 0v-35.400000000000006z" fill="#e2e2e2" stroke="#6a6a6a" stroke-width="2.6"/><path d="M1.0 23.6a27.0 10.8 0 0 0 54 0" fill="none" stroke="#6a6a6a" stroke-width="2.6"/><path d="M1.0 35.400000000000006a27.0 10.8 0 0 0 54 0" fill="none" stroke="#6a6a6a" stroke-width="2.6"/><ellipse cx="28" cy="11.8" rx="27.0" ry="10.8" fill="#e2e2e2" stroke="#6a6a6a" stroke-width="2.6"/><circle cx="47" cy="47" r="17" fill="#e2e2e2" opacity="0"/><g transform="translate(47 47) rotate(45)"><rect x="-11.5" y="-2.0" width="23.0" height="4" fill="#dfe9ee" stroke="#54727e" stroke-width="1.6"/><circle cx="-11.5" cy="0" r="5" fill="#dfe9ee" stroke="#54727e" stroke-width="1.6"/><circle cx="11.5" cy="0" r="5" fill="#dfe9ee" stroke="#54727e" stroke-width="1.6"/><rect x="-7.5" y="-1.2" width="5" height="2.4" fill="#dfe9ee"/><rect x="2.5" y="-1.2" width="5" height="2.4" fill="#dfe9ee"/><rect x="-19.5" y="-2.1" width="9" height="4.2" fill="#e2e2e2" transform="rotate(35 -11.5 0)"/><rect x="10.5" y="-2.1" width="9" height="4.2" fill="#e2e2e2" transform="rotate(35 11.5 0)"/></g><path d="M58.2 35.8L45.32 48.68" stroke="#54727e" stroke-width="2" stroke-linecap="round"/><path d="M61 33L58.2 35.8" stroke="#54727e" stroke-width="4.2749999999999995" stroke-linecap="round"/><path d="M61 33L58.2 35.8" stroke="#dfe9ee" stroke-width="1.0749999999999993" stroke-linecap="round"/><path d="M45.32 48.68L33 61" stroke="#9d3030" stroke-width="7.7" stroke-linecap="round"/><path d="M45.32 48.68L33 61" stroke="#f55252" stroke-width="4.5" stroke-linecap="round"/></symbol><symbol id="s-config" viewBox="0 0 64 64"><rect x="1" y="1" width="62" height="62" rx="3" fill="#e2e2e2" stroke="#8b8b8b" stroke-width="2"/><path d="M14.64 8.44V43.160000000000004" stroke="#666" stroke-width="2"/><rect x="8.440000000000001" y="24.25" width="12.4" height="5.58" rx="2" fill="#ffe95a" stroke="#a39a35" stroke-width="1.3"/><circle cx="14.64" cy="52.46" r="4.03" fill="#f55252" stroke="#9d3030" stroke-width="1.3"/><path d="M32.0 8.44V43.160000000000004" stroke="#666" stroke-width="2"/><rect x="25.8" y="14.950000000000003" width="12.4" height="5.58" rx="2" fill="#ffe95a" stroke="#a39a35" stroke-width="1.3"/><circle cx="32.0" cy="52.46" r="4.03" fill="#6ee071" stroke="#38923d" stroke-width="1.3"/><path d="M49.36 8.44V43.160000000000004" stroke="#666" stroke-width="2"/><rect x="43.16" y="29.21" width="12.4" height="5.58" rx="2" fill="#ffe95a" stroke="#a39a35" stroke-width="1.3"/><circle cx="49.36" cy="52.46" r="4.03" fill="#f55252" stroke="#9d3030" stroke-width="1.3"/></symbol><symbol id="s-new" viewBox="0 0 64 64"><rect x="1" y="1" width="52" height="52" rx="4" fill="#4c505b"/><rect x="6" y="6" width="18" height="18" rx="2" fill="none" stroke="#383b45" stroke-width="2.2"/><circle cx="39" cy="15" r="9.5" fill="none" stroke="#383b45" stroke-width="2.2"/><path d="M15 29l9 10l-9 10l-9-10z" fill="none" stroke="#383b45" stroke-width="2.2" stroke-linejoin="round"/><path d="M28 49l8-18h6" fill="none" stroke="#383b45" stroke-width="2.6" stroke-linecap="round"/><circle cx="49" cy="49" r="14.5" fill="#4c505b" stroke="#383b45" stroke-width="2.4"/><path d="M41 49h16M49 41v16" stroke="#383b45" stroke-width="2.4"/></symbol><symbol id="s-quick" viewBox="0 0 64 64"><path d="M48.7 26.4L55.8 26.9L55.8 33.1L48.7 33.6L45.2 42.1L49.9 47.5L45.5 51.9L40.1 47.2L31.6 50.7L31.1 57.8L24.9 57.8L24.4 50.7L15.9 47.2L10.5 51.9L6.1 47.5L10.8 42.1L7.3 33.6L0.2 33.1L0.2 26.9L7.3 26.4L10.8 17.9L6.1 12.5L10.5 8.1L15.9 12.8L24.4 9.3L24.9 2.2L31.1 2.2L31.6 9.3L40.1 12.8L45.5 8.1L49.9 12.5L45.2 17.9z" fill="#4c505b" stroke="#383b45" stroke-width="2.2" stroke-linejoin="round"/><circle cx="28" cy="30" r="11" fill="#141a24" stroke="#383b45" stroke-width="2.2"/><path d="M50 22L34 46h10l-7 17l23-27H48l7-14z" fill="#4c505b" stroke="#383b45" stroke-width="2.2" stroke-linejoin="round"/></symbol><symbol id="s-props" viewBox="0 0 64 64"><rect x="1" y="1" width="44" height="48" rx="3" fill="#4c505b" stroke="#383b45" stroke-width="2"/><path d="M10 12h26M10 20h26M10 28h26M10 36h26" stroke="#383b45" stroke-width="2.4"/><path d="M30 62l4-10l20-21a4 4 0 0 1 7 7L41 59z" fill="#4c505b" stroke="#383b45" stroke-width="2.2" stroke-linejoin="round"/><path d="M50 35l7 7" stroke="#383b45" stroke-width="2"/></symbol><symbol id="t-settings" viewBox="0 0 64 64"><rect x="1" y="1" width="62" height="62" rx="3" fill="#e2e2e2" stroke="#8b8b8b" stroke-width="2"/><path d="M14.64 8.44V43.160000000000004" stroke="#666" stroke-width="2"/><rect x="8.440000000000001" y="24.25" width="12.4" height="5.58" rx="2" fill="#ffe95a" stroke="#a39a35" stroke-width="1.3"/><circle cx="14.64" cy="52.46" r="4.03" fill="#f55252" stroke="#9d3030" stroke-width="1.3"/><path d="M32.0 8.44V43.160000000000004" stroke="#666" stroke-width="2"/><rect x="25.8" y="14.950000000000003" width="12.4" height="5.58" rx="2" fill="#ffe95a" stroke="#a39a35" stroke-width="1.3"/><circle cx="32.0" cy="52.46" r="4.03" fill="#6ee071" stroke="#38923d" stroke-width="1.3"/><path d="M49.36 8.44V43.160000000000004" stroke="#666" stroke-width="2"/><rect x="43.16" y="29.21" width="12.4" height="5.58" rx="2" fill="#ffe95a" stroke="#a39a35" stroke-width="1.3"/><circle cx="49.36" cy="52.46" r="4.03" fill="#f55252" stroke="#9d3030" stroke-width="1.3"/></symbol><symbol id="t-output" viewBox="0 0 64 64"><rect x="1" y="6" width="62" height="52" rx="2" fill="#e2e2e2" stroke="#777" stroke-width="2.4"/><rect x="6" y="11" width="52" height="42" fill="none" stroke="#777" stroke-width="1.6"/><circle cx="22" cy="32" r="10" fill="#62d8fa" stroke="#2d8ca8" stroke-width="2"/><text x="22" y="38" text-anchor="middle" font-family="Liberation Mono" font-weight="700" font-size="16" fill="#1f6f88">i</text><path d="M37 19h17M37 26h17M37 33h17M37 40h17M12 47h42" stroke="#777" stroke-width="2"/></symbol><symbol id="t-sql" viewBox="0 0 64 64"><path d="M4 2h36l12 12v48H4z" fill="#ffe95a" stroke="#a39a35" stroke-width="2"/><path d="M40 2v12h12z" fill="#f2f2f2" stroke="#a39a35" stroke-width="1.6" stroke-linejoin="round"/><text x="6" y="34" font-family="Liberation Sans" font-size="19" fill="#8a7f20" letter-spacing="-0.5">SQL</text><path d="M52 54l10 9" stroke="#2b7f96" stroke-width="2.6"/><circle cx="46" cy="48" r="10.5" fill="#c8f1fc" stroke="#62d8fa" stroke-width="3"/></symbol><symbol id="d-dbdb" viewBox="0 0 64 64"><path d="M1.0 7.0v18.0a15.0 6.0 0 0 0 30 0v-18.0z" fill="#e2e2e2" stroke="#6a6a6a" stroke-width="2"/><path d="M1.0 13.0a15.0 6.0 0 0 0 30 0" fill="none" stroke="#6a6a6a" stroke-width="2"/><path d="M1.0 19.0a15.0 6.0 0 0 0 30 0" fill="none" stroke="#6a6a6a" stroke-width="2"/><ellipse cx="16" cy="7.0" rx="15.0" ry="6.0" fill="#e2e2e2" stroke="#6a6a6a" stroke-width="2"/><path transform="translate(38 0) scale(1.0)" d="M0 0h15a4 4 0 0 1 4 4v12h6l-9.5 11l-9.5 -11h6v-9h-12z" fill="#6ee071" stroke="#38923d" stroke-width="1.8" stroke-linejoin="round"/><path transform="translate(1 36) scale(1.0)" d="M0 0h7v14h10v-6l11 9.5l-11 9.5v-6h-13a4 4 0 0 1 -4 -4z" fill="#f55252" stroke="#9d3030" stroke-width="1.8" stroke-linejoin="round"/><path d="M32.0 38.0v19.0a15.0 6.0 0 0 0 30 0v-19.0z" fill="#e2e2e2" stroke="#6a6a6a" stroke-width="2"/><path d="M32.0 44.333333333333336a15.0 6.0 0 0 0 30 0" fill="none" stroke="#6a6a6a" stroke-width="2"/><path d="M32.0 50.666666666666664a15.0 6.0 0 0 0 30 0" fill="none" stroke="#6a6a6a" stroke-width="2"/><ellipse cx="47" cy="38.0" rx="15.0" ry="6.0" fill="#e2e2e2" stroke="#6a6a6a" stroke-width="2"/></symbol><symbol id="d-mdb" viewBox="0 0 64 64"><rect x="1" y="1" width="34" height="30" rx="3" fill="#fff" stroke="#8a8a8a" stroke-width="2"/><rect x="10.520000000000001" y="15.399999999999999" width="10.88" height="10.799999999999999" rx="2" fill="#62d8fa" stroke="#2d8ca8" stroke-width="1.5"/><circle cx="10.520000000000001" cy="11.799999999999999" r="5.78" fill="#f55252" stroke="#9d3030" stroke-width="1.5"/><path d="M25.48 7.6l6.800000000000001 18.6h-12.24z" fill="#6ee071" stroke="#38923d" stroke-width="2" stroke-linejoin="round"/><path transform="translate(40 0) scale(1.0)" d="M0 0h15a4 4 0 0 1 4 4v12h6l-9.5 11l-9.5 -11h6v-9h-12z" fill="#6ee071" stroke="#38923d" stroke-width="1.8" stroke-linejoin="round"/><path transform="translate(1 36) scale(1.0)" d="M0 0h7v14h10v-6l11 9.5l-11 9.5v-6h-13a4 4 0 0 1 -4 -4z" fill="#f55252" stroke="#9d3030" stroke-width="1.8" stroke-linejoin="round"/><path d="M34.0 38.0v19.0a15.0 6.0 0 0 0 30 0v-19.0z" fill="#e2e2e2" stroke="#6a6a6a" stroke-width="2"/><path d="M34.0 44.333333333333336a15.0 6.0 0 0 0 30 0" fill="none" stroke="#6a6a6a" stroke-width="2"/><path d="M34.0 50.666666666666664a15.0 6.0 0 0 0 30 0" fill="none" stroke="#6a6a6a" stroke-width="2"/><ellipse cx="49" cy="38.0" rx="15.0" ry="6.0" fill="#e2e2e2" stroke="#6a6a6a" stroke-width="2"/></symbol><symbol id="d-mm" viewBox="0 0 64 64"><rect x="1" y="1" width="34" height="30" rx="3" fill="#fff" stroke="#8a8a8a" stroke-width="2"/><rect x="10.520000000000001" y="15.399999999999999" width="10.88" height="10.799999999999999" rx="2" fill="#62d8fa" stroke="#2d8ca8" stroke-width="1.5"/><circle cx="10.520000000000001" cy="11.799999999999999" r="5.78" fill="#f55252" stroke="#9d3030" stroke-width="1.5"/><path d="M25.48 7.6l6.800000000000001 18.6h-12.24z" fill="#6ee071" stroke="#38923d" stroke-width="2" stroke-linejoin="round"/><path transform="translate(40 0) scale(1.0)" d="M0 0h15a4 4 0 0 1 4 4v12h6l-9.5 11l-9.5 -11h6v-9h-12z" fill="#6ee071" stroke="#38923d" stroke-width="1.8" stroke-linejoin="round"/><path transform="translate(1 36) scale(1.0)" d="M0 0h7v14h10v-6l11 9.5l-11 9.5v-6h-13a4 4 0 0 1 -4 -4z" fill="#f55252" stroke="#9d3030" stroke-width="1.8" stroke-linejoin="round"/><rect x="32" y="34" width="31" height="28" rx="3" fill="#fff" stroke="#8a8a8a" stroke-width="2"/><rect x="40.68" y="47.44" width="9.92" height="10.08" rx="2" fill="#62d8fa" stroke="#2d8ca8" stroke-width="1.5"/><circle cx="40.68" cy="44.08" r="5.2700000000000005" fill="#f55252" stroke="#9d3030" stroke-width="1.5"/><path d="M54.32 40.16l6.2 17.36h-11.16z" fill="#6ee071" stroke="#38923d" stroke-width="2" stroke-linejoin="round"/></symbol><symbol id="p-new" viewBox="0 0 64 64"><path d="M1 4a3 3 0 0 1 3-3h32l14 14v44a3 3 0 0 1 -3 3H4a3 3 0 0 1 -3-3z" fill="#fff" stroke="#8a8a8a" stroke-width="2"/><polygon points="45.0,30.0 49.7,40.5 61.2,41.7 52.6,49.5 55.0,60.8 45.0,55.0 35.0,60.8 37.4,49.5 28.8,41.7 40.3,40.5" fill="#ffe95a" stroke="#a39a35" stroke-width="2.2" stroke-linejoin="round"/></symbol><symbol id="p-edit" viewBox="0 0 64 64"><rect x="1" y="2" width="44" height="46" rx="2" fill="#fff" stroke="#8a8a8a" stroke-width="2"/><path d="M14 12h20M9 20h26M9 28h26M9 36h18" stroke="#666" stroke-width="2"/><path d="M34 62l3-10l18-19a4 4 0 0 1 7 6L44 58z" fill="#ffe95a" stroke="#a39a35" stroke-width="2" stroke-linejoin="round"/><path d="M52 36l7 6l3-4a4 4 0 0 0 -7-6z" fill="#f55252" stroke="#9d3030" stroke-width="1.6" stroke-linejoin="round"/><path d="M34 62l3-10l7 6z" fill="#eee" stroke="#777" stroke-width="1.4" stroke-linejoin="round"/></symbol><symbol id="p-save" viewBox="0 0 64 64"><rect x="1" y="42" width="62" height="21" rx="4" fill="#e2e2e2" stroke="#7a7a7a" stroke-width="2"/><path d="M1.5 46L8.5 18.6a5 5 0 0 1 5-4h37a5 5 0 0 1 5 4L62.5 46z" fill="#e2e2e2" stroke="#7a7a7a" stroke-width="2" stroke-linejoin="round"/><path d="M26.5 1h11v21.0h10.5l-16 14.0l-16 -14.0h10.5z" fill="#62d8fa" stroke="#2d8ca8" stroke-width="2" stroke-linejoin="round"/><path d="M10 55h38" stroke="#7a7a7a" stroke-width="2.5"/><circle cx="54" cy="50" r="1.6" fill="#7a7a7a"/></symbol><symbol id="p-trash" viewBox="0 0 64 64"><path d="M25.84 9.8v-3.48a3 3 0 0 1 3-3h6.32a3 3 0 0 1 3 3v3.48" fill="none" stroke="#7a7a7a" stroke-width="2"/><path d="M7 10.96h50" stroke="#e2e2e2" stroke-width="5" stroke-linecap="round"/><path d="M11 15.600000000000001h42l-2 42.92a3 3 0 0 1 -3 3h-32a3 3 0 0 1 -3 -3z" fill="#e2e2e2" stroke="#7a7a7a" stroke-width="1.5"/><path d="M23.2 22.56v29.0" stroke="#7a7a7a" stroke-width="3" stroke-linecap="round"/><path d="M32.0 22.56v29.0" stroke="#7a7a7a" stroke-width="3" stroke-linecap="round"/><path d="M40.8 22.56v29.0" stroke="#7a7a7a" stroke-width="3" stroke-linecap="round"/></symbol><symbol id="p-refresh" viewBox="0 0 64 64"><circle cx="32" cy="32" r="29" fill="#62d8fa" stroke="#35b5da" stroke-width="2.4"/><path d="M13 29a19 19 0 0 1 34-9M51 35a19 19 0 0 1 -34 9" fill="none" stroke="#2289aa" stroke-width="3"/><path d="M49 10v11h-11M15 54v-11h11" fill="none" stroke="#2289aa" stroke-width="3"/></symbol><symbol id="c-server" viewBox="0 0 64 64"><rect x="20" y="2" width="22" height="50" fill="#e2e2e2" stroke="#8a8a8a" stroke-width="2"/><path d="M25 9h12M25 15h12M25 21h12" stroke="#555" stroke-width="2.4"/><rect x="30" y="28" width="3" height="18" fill="#555"/><path d="M10 62l4-9h36l4 9z" fill="#e2e2e2" stroke="#8a8a8a" stroke-width="2" stroke-linejoin="round"/></symbol><symbol id="c-db" viewBox="0 0 64 64"><path d="M4.0 15.200000000000001v33.599999999999994a28.0 11.200000000000001 0 0 0 56 0v-33.599999999999994z" fill="#e2e2e2" stroke="#6a6a6a" stroke-width="2.4"/><path d="M4.0 23.6a28.0 11.200000000000001 0 0 0 56 0" fill="none" stroke="#6a6a6a" stroke-width="2.4"/><path d="M4.0 32.0a28.0 11.200000000000001 0 0 0 56 0" fill="none" stroke="#6a6a6a" stroke-width="2.4"/><path d="M4.0 40.4a28.0 11.200000000000001 0 0 0 56 0" fill="none" stroke="#6a6a6a" stroke-width="2.4"/><ellipse cx="32" cy="15.200000000000001" rx="28.0" ry="11.200000000000001" fill="#e2e2e2" stroke="#6a6a6a" stroke-width="2.4"/></symbol><symbol id="g-trash" viewBox="0 0 64 64"><path d="M25.28 8.9v-3.54a3 3 0 0 1 3-3h7.440000000000001a3 3 0 0 1 3 3v3.54" fill="none" stroke="#383b46" stroke-width="2"/><path d="M5 10.08h54" stroke="#474b57" stroke-width="5" stroke-linecap="round"/><path d="M9 14.8h46l-2 43.66a3 3 0 0 1 -3 3h-36a3 3 0 0 1 -3 -3z" fill="#474b57" stroke="#383b46" stroke-width="1.5"/><path d="M22.4 21.88v29.5" stroke="#383b46" stroke-width="3" stroke-linecap="round"/><path d="M32.0 21.88v29.5" stroke="#383b46" stroke-width="3" stroke-linecap="round"/><path d="M41.599999999999994 21.88v29.5" stroke="#383b46" stroke-width="3" stroke-linecap="round"/></symbol><symbol id="g-folder" viewBox="0 0 64 64"><path d="M4 26a3 3 0 0 1 3-3h12l5 5h20a3 3 0 0 1 3 3v24H4z" fill="#474b57" stroke="#383b46" stroke-width="2"/><rect x="16" y="4" width="38" height="34" rx="2" fill="#474b57" stroke="#383b46" stroke-width="2"/><path d="M24 12h22M30 20h14" stroke="#383b46" stroke-width="2.4"/><path d="M3 34a2 2 0 0 1 2-2.5h54a2 2 0 0 1 2 2.5l-5 24a3 3 0 0 1 -3 3H11a3 3 0 0 1 -3 -3z" fill="#474b57" stroke="#383b46" stroke-width="2"/></symbol><symbol id="f-funnel" viewBox="0 0 64 64"><path d="M3 10.54c1.16 12.76 17.4 19.720000000000002 24.36 26.68v23.200000000000003l9.28 -4.0600000000000005v-19.14c6.96 -6.96 23.200000000000003 -13.92 24.36 -26.68z" fill="#ffe95a" stroke="#a39a35" stroke-width="2" stroke-linejoin="round"/><ellipse cx="32.0" cy="10.54" rx="29.0" ry="6.96" fill="#ffe95a" stroke="#a39a35" stroke-width="2"/><circle cx="44" cy="44" r="8" fill="none" stroke="#6a6420" stroke-width="1.6"/></symbol><symbol id="f-funnel2" viewBox="0 0 64 64"><path d="M3 10.54c1.16 12.76 17.4 19.720000000000002 24.36 26.68v23.200000000000003l9.28 -4.0600000000000005v-19.14c6.96 -6.96 23.200000000000003 -13.92 24.36 -26.68z" fill="#ffe95a" stroke="#a39a35" stroke-width="2" stroke-linejoin="round"/><ellipse cx="32.0" cy="10.54" rx="29.0" ry="6.96" fill="#ffe95a" stroke="#a39a35" stroke-width="2"/></symbol><symbol id="f-add" viewBox="0 0 64 64"><path d="M1 8.8c1.0 13.2 15.0 20.400000000000002 21.0 27.6v24.0l8.0 -4.2v-19.8c6.0 -7.199999999999999 20.0 -14.399999999999999 21.0 -27.6z" fill="#ffe95a" stroke="#a39a35" stroke-width="2" stroke-linejoin="round"/><ellipse cx="26.0" cy="8.8" rx="25.0" ry="7.199999999999999" fill="#ffe95a" stroke="#a39a35" stroke-width="2"/><circle cx="46" cy="48" r="14" fill="#6ee071" stroke="#38923d" stroke-width="2.2"/><path d="M38 48h16M46 40v16" stroke="#fff" stroke-width="2.6"/></symbol><symbol id="f-clear" viewBox="0 0 64 64"><path d="M18.240000000000002 8.600000000000001v-2.76a3 3 0 0 1 3-3h3.5200000000000014a3 3 0 0 1 3 3v2.76" fill="none" stroke="#383b46" stroke-width="2"/><path d="M3 9.52h40" stroke="#474b57" stroke-width="5" stroke-linecap="round"/><path d="M7 13.200000000000001h32l-2 34.04a3 3 0 0 1 -3 3h-22a3 3 0 0 1 -3 -3z" fill="#474b57" stroke="#383b46" stroke-width="1.5"/><path d="M16.2 18.72v23.0" stroke="#383b46" stroke-width="3" stroke-linecap="round"/><path d="M23.0 18.72v23.0" stroke="#383b46" stroke-width="3" stroke-linecap="round"/><path d="M29.799999999999997 18.72v23.0" stroke="#383b46" stroke-width="3" stroke-linecap="round"/><circle cx="44" cy="46" r="15" fill="#474b57" stroke="#383b46" stroke-width="2.2"/><path d="M35 44a9 9 0 0 1 16-4M53 48a9 9 0 0 1 -16 4" fill="none" stroke="#383b46" stroke-width="2.4"/><path d="M52 34v7h-7M36 58v-7h7" fill="none" stroke="#383b46" stroke-width="2.4"/></symbol><symbol id="f-check" viewBox="0 0 64 64"><path d="M4 34l10-9l12 12L54 6l8 8L26 56z" fill="#474b57" stroke="#383b46" stroke-width="2" stroke-linejoin="round"/></symbol><symbol id="f-object" viewBox="0 0 64 64"><rect x="2" y="6" width="60" height="52" fill="#fff" stroke="#b0b0b0" stroke-width="2"/><rect x="2" y="6" width="60" height="13" fill="#62d8fa"/></symbol><symbol id="f-pattern" viewBox="0 0 64 64"><rect x="2" y="2" width="60" height="60" rx="7" fill="#62d8fa" stroke="#35b5da" stroke-width="2"/><path d="M16 14h32v8M16 14v8M32 14v34M24 48h16" fill="none" stroke="#1f6f88" stroke-width="3.4"/><path d="M52 52h10v10z" fill="#fff"/></symbol><symbol id="f-info" viewBox="0 0 64 64"><circle cx="32" cy="32" r="31" fill="#62d8fa"/><circle cx="32" cy="32" r="30" fill="none" stroke="#3f8ea6" stroke-width="1.6"/><path d="M27 23h5v20c0 2 1 3 3 3h3" fill="none" stroke="#3a8199" stroke-width="2.4"/><circle cx="31" cy="15" r="1.8" fill="#3a8199"/></symbol><symbol id="f-cancel" viewBox="0 0 64 64"><circle cx="32" cy="32" r="27" fill="none" stroke="#444853" stroke-width="8"/><path d="M13 51L51 13" stroke="#444853" stroke-width="7"/></symbol></defs></svg><div class="" style="left:19px;top:21px;width:43px;height:9px;background:#fff;border-radius:3px"></div>
<div class="" style="left:19px;top:36px;width:43px;height:9px;background:#fff;border-radius:3px"></div>
<div class="" style="left:19px;top:51px;width:43px;height:9px;background:#fff;border-radius:3px"></div>
<div class="" style="left:1104.5px;top:5.5px;width:71.20000000000005px;height:70.5px;background:#272b3d;border:2px solid #394263;border-radius:9px"></div>
<div class="" style="left:1188.5px;top:5.5px;width:71.20000000000005px;height:70.5px;background:#272b3d;border:2px solid #394263;border-radius:9px"></div>
<div class="" style="left:1356.3px;top:5.5px;width:71.10000000000014px;height:70.5px;background:#272b3d;border:2px solid #394263;border-radius:9px"></div>
<svg preserveAspectRatio="none" class="ic" style="left:98px;top:14px;width:52px;height:53px;" viewBox="0 0 64 64"><use href="#i-new"/></svg>
<svg preserveAspectRatio="none" class="ic" style="left:183px;top:14px;width:52px;height:53px;" viewBox="0 0 64 64"><use href="#i-recent"/></svg>
<svg preserveAspectRatio="none" class="ic" style="left:266px;top:14px;width:52px;height:53px;" viewBox="0 0 64 64"><use href="#i-open"/></svg>
<svg preserveAspectRatio="none" class="ic" style="left:350px;top:14px;width:52px;height:53px;" viewBox="0 0 64 64"><use href="#i-save"/></svg>
<svg preserveAspectRatio="none" class="ic" style="left:434px;top:14px;width:52px;height:53px;" viewBox="0 0 64 64"><use href="#i-saveas"/></svg>
<svg preserveAspectRatio="none" class="ic" style="left:518px;top:14px;width:52px;height:53px;" viewBox="0 0 64 64"><use href="#i-saveall"/></svg>
<svg preserveAspectRatio="none" class="ic" style="left:604px;top:14px;width:49px;height:53px;" viewBox="0 0 64 64"><use href="#i-print"/></svg>
<svg preserveAspectRatio="none" class="ic" style="left:691px;top:15px;width:52px;height:52px;" viewBox="0 0 64 64"><use href="#i-zout"/></svg>
<svg preserveAspectRatio="none" class="ic" style="left:775px;top:15px;width:52px;height:52px;" viewBox="0 0 64 64"><use href="#i-z11"/></svg>
<svg preserveAspectRatio="none" class="ic" style="left:859px;top:15px;width:52px;height:52px;" viewBox="0 0 64 64"><use href="#i-zin"/></svg>
<svg preserveAspectRatio="none" class="ic" style="left:946px;top:15px;width:52px;height:52px;" viewBox="0 0 64 64"><use href="#i-zobj"/></svg>
<svg preserveAspectRatio="none" class="ic" style="left:1029px;top:16px;width:53px;height:49px;" viewBox="0 0 64 64"><use href="#i-bino"/></svg>
<svg preserveAspectRatio="none" class="ic" style="left:1284px;top:15px;width:48px;height:51px;" viewBox="0 0 64 64"><use href="#i-lockarr"/></svg>
<svg preserveAspectRatio="none" class="ic" style="left:1449px;top:14px;width:52px;height:53px;" viewBox="0 0 64 64"><use href="#i-fit"/></svg>
<svg preserveAspectRatio="none" class="ic" style="left:1533px;top:14px;width:53px;height:53px;" viewBox="0 0 64 64"><use href="#i-rels"/></svg>
<svg preserveAspectRatio="none" class="ic" style="left:1618px;top:16px;width:52px;height:50px;" viewBox="0 0 64 64"><use href="#i-compact"/></svg>
<svg preserveAspectRatio="none" class="ic" style="left:1709px;top:14px;width:45px;height:53px;" viewBox="0 0 64 64"><use href="#i-left"/></svg>
<svg preserveAspectRatio="none" class="ic" style="left:1800px;top:14px;width:45px;height:53px;" viewBox="0 0 64 64"><use href="#i-right"/></svg>
<svg preserveAspectRatio="none" class="ic" style="left:2246px;top:15px;width:52px;height:52px;" viewBox="0 0 64 64"><use href="#i-filex"/></svg>
<svg preserveAspectRatio="none" class="ic" style="left:2333px;top:14px;width:53px;height:53px;" viewBox="0 0 64 64"><use href="#i-elesync"/></svg>
<svg preserveAspectRatio="none" class="ic" style="left:2421px;top:14px;width:45px;height:53px;" viewBox="0 0 64 64"><use href="#i-flask"/></svg>
<svg preserveAspectRatio="none" class="ic" style="left:2501px;top:14px;width:54px;height:53px;" viewBox="0 0 64 64"><use href="#i-conn"/></svg>
<svg preserveAspectRatio="none" class="ic" style="left:2585px;top:14px;width:53px;height:53px;" viewBox="0 0 64 64"><use href="#i-puzzle"/></svg>
<svg preserveAspectRatio="none" class="ic" style="left:2673px;top:13px;width:51px;height:54px;" viewBox="0 0 64 64"><use href="#i-bug"/></svg>
<svg preserveAspectRatio="none" class="ic" style="left:2756px;top:15px;width:52px;height:52px;" viewBox="0 0 64 64"><use href="#i-donate"/></svg>
<svg preserveAspectRatio="none" class="ic" style="left:2840px;top:14px;width:53px;height:53px;" viewBox="0 0 64 64"><use href="#i-buoy"/></svg>
<svg preserveAspectRatio="none" class="ic" style="left:2923px;top:14px;width:54px;height:53px;" viewBox="0 0 64 64"><use href="#i-elehelp"/></svg>
<svg preserveAspectRatio="none" class="ic" style="left:3007px;top:14px;width:54px;height:53px;" viewBox="0 0 64 64"><use href="#i-starc"/></svg>
<svg preserveAspectRatio="none" class="ic" style="left:1115px;top:16px;width:49px;height:49px;" viewBox="0 0 64 64"><use href="#i-grid"/></svg>
<svg preserveAspectRatio="none" class="ic" style="left:1199px;top:16px;width:50px;height:50px;" viewBox="0 0 64 64"><use href="#i-gridd"/></svg>
<svg preserveAspectRatio="none" class="ic" style="left:1367px;top:15px;width:50px;height:51px;" viewBox="0 0 64 64"><use href="#i-gridmag"/></svg>
<div class="" style="left:672.5px;top:5px;width:2.0px;height:72px;background:#343a4e"></div>
<div class="" style="left:928px;top:5px;width:2px;height:72px;background:#343a4e"></div>
<div class="" style="left:1687px;top:5px;width:2px;height:72px;background:#343a4e"></div>
<div class="" style="left:2315.5px;top:5px;width:2.0px;height:72px;background:#343a4e"></div>
<div class="" style="left:2655.5px;top:5px;width:2.0px;height:72px;background:#343a4e"></div>
<div class="" style="left:1873.4px;top:14.4px;width:349.0px;height:51.6px;background:#232838;border:2px solid #2e3550;border-radius:8px"></div>
<div class="t" style="left:1880.5px;top:21.5px;height:40px;line-height:40px;color:#5c6675;font-size:29px;letter-spacing:.6pxletter-spacing:0.6px;transform:scaleX(1.0189);transform-origin:0 50%;">demodb</div>
<div class="arr" style="left:2193px;top:35.5px;width:18px;height:10.5px;border-left-width:9px;border-right-width:9px;border-top:10.5px solid #5c6675;width:0;height:0"></div>
<div class="" style="left:0px;top:750.5px;width:160px;height:128.0px;background:#2a2f42;border:2px solid #3a4260;border-right:none;border-radius:9px 0 0 9px"></div>
<svg class="ic" style="left:46px;top:96px;width:67px;height:67px;" viewBox="0 0 64 64"><use href="#s-welcome"/></svg>
<div class="t s" style="left:-1.0px;width:160px;text-align:center;top:169.0px;height:34px;line-height:34px;color:#eceef2;letter-spacing:0.4px;">Welcome</div>
<svg class="ic" style="left:46px;top:229px;width:67px;height:67px;" viewBox="0 0 64 64"><use href="#s-design"/></svg>
<div class="t s" style="left:-1.0px;width:160px;text-align:center;top:302.0px;height:34px;line-height:34px;color:#eceef2;letter-spacing:0.6px;transform:scaleX(1.0203);transform-origin:50% 50%;">Design</div>
<svg class="ic" style="left:46px;top:362px;width:67px;height:67px;" viewBox="0 0 64 64"><use href="#s-manage"/></svg>
<div class="t s" style="left:-1.0px;width:160px;text-align:center;top:435.0px;height:34px;line-height:34px;color:#eceef2;letter-spacing:0.6px;transform:scaleX(1.0345);transform-origin:50% 50%;">Manage</div>
<svg class="ic" style="left:46px;top:495px;width:67px;height:67px;" viewBox="0 0 64 64"><use href="#s-import"/></svg>
<div class="t s" style="left:-1.0px;width:160px;text-align:center;top:568.0px;height:34px;line-height:34px;color:#eceef2;letter-spacing:0.6px;transform:scaleX(1.1159);transform-origin:50% 50%;">Import</div>
<svg class="ic" style="left:46px;top:628px;width:67px;height:67px;" viewBox="0 0 64 64"><use href="#s-export"/></svg>
<div class="t s" style="left:-1.0px;width:160px;text-align:center;top:701.0px;height:34px;line-height:34px;color:#eceef2;letter-spacing:0.6px;transform:scaleX(1.0225);transform-origin:50% 50%;">Export</div>
<svg class="ic" style="left:46px;top:761px;width:67px;height:67px;" viewBox="0 0 64 64"><use href="#s-diff"/></svg>
<div class="t s" style="left:-1.0px;width:160px;text-align:center;top:834.0px;height:34px;line-height:34px;color:#eceef2;letter-spacing:0.6px;transform:scaleX(1.095);transform-origin:50% 50%;">Diff</div>
<svg class="ic" style="left:46px;top:894.4px;width:67px;height:67.0px;" viewBox="0 0 64 64"><use href="#s-fix"/></svg>
<div class="t s" style="left:-1.0px;width:160px;text-align:center;top:967.4px;height:34px;line-height:34px;color:#eceef2;letter-spacing:0.6px;">Fix</div>
<svg class="ic" style="left:46px;top:1027.6px;width:67px;height:67.0px;" viewBox="0 0 64 64"><use href="#s-config"/></svg>
<div class="t s" style="left:-1.0px;width:160px;text-align:center;top:1100.6px;height:34px;line-height:34px;color:#eceef2;letter-spacing:0.6px;transform:scaleX(1.015);transform-origin:50% 50%;">Configure</div>
<svg class="ic" style="left:46px;top:1174.6px;width:67px;height:67.0px;" viewBox="0 0 64 64"><use href="#s-new"/></svg>
<div class="t s" style="left:-1.0px;width:160px;text-align:center;top:1247.6px;height:34px;line-height:34px;color:#576070;letter-spacing:0.6px;transform:scaleX(1.0169);transform-origin:50% 50%;">New</div>
<svg class="ic" style="left:46px;top:1307.8px;width:67px;height:67.0px;" viewBox="0 0 64 64"><use href="#s-quick"/></svg>
<div class="t s" style="left:-1.0px;width:160px;text-align:center;top:1380.8px;height:34px;line-height:34px;color:#576070;letter-spacing:0.6px;transform:scaleX(1.0144);transform-origin:50% 50%;">Quick</div>
<svg class="ic" style="left:46px;top:1440px;width:67px;height:67px;" viewBox="0 0 64 64"><use href="#s-props"/></svg>
<div class="t s" style="left:-1.0px;width:160px;text-align:center;top:1513.0px;height:34px;line-height:34px;color:#576070;letter-spacing:0.6px;transform:scaleX(1.016);transform-origin:50% 50%;">Properties</div>
<div class="" style="left:0px;top:1152px;width:158px;height:2px;background:#2c3346"></div>
<div class="" style="left:140px;top:1216.5px;width:10px;height:18.0px;width:0;height:0;border-top:9px solid transparent;border-bottom:9px solid transparent;border-left:10px solid #5a606e"></div>
<div class="" style="left:140px;top:1350px;width:10px;height:18px;width:0;height:0;border-top:9px solid transparent;border-bottom:9px solid transparent;border-left:10px solid #5a606e"></div>
<div class="" style="left:0px;top:1622px;width:159px;height:20px;background:#1b72ae;border-top:2px solid #2a9df4;border-right:2px solid #2a9df4"></div>
<div class="" style="left:158px;top:82px;width:3680px;height:1560px;background:#2a2f42;border-top:2px solid #434c69;border-left:1px solid #3b4360;border-right:2px solid #3b4360;border-bottom:2px solid #3e4660"></div>
<div class="" style="left:165px;top:89.5px;width:1865.5px;height:1546.5px;background:#141a24;border:1.5px solid #3b4360"></div>
<div class="" style="left:173px;top:153px;width:1848px;height:1474.5px;background:#30384c;border:2px solid #485172;border-radius:0 0 9px 9px"></div>
<div class="" style="left:173px;top:101.5px;width:190.5px;height:55.5px;background:#30384c;border:2px solid #485172;border-bottom:none;border-radius:9px 9px 0 0"></div>
<div class="" style="left:365px;top:105.5px;width:176.5px;height:48.5px;background:#282d40;border:2px solid #3b4360;border-bottom:none;border-radius:9px 9px 0 0"></div>
<div class="" style="left:543.5px;top:105.5px;width:239.5px;height:48.5px;background:#282d40;border:2px solid #3b4360;border-bottom:none;border-radius:9px 9px 0 0"></div>
<svg class="ic" style="left:194.5px;top:109.5px;width:34.0px;height:34.0px;" viewBox="0 0 64 64"><use href="#t-settings"/></svg>
<div class="t" style="left:235.5px;top:110.0px;height:40px;line-height:40px;letter-spacing:0.6px;transform:scaleX(1.0499);transform-origin:0 50%;">Settings</div>
<svg class="ic" style="left:385.5px;top:111px;width:34.0px;height:34px;" viewBox="0 0 64 64"><use href="#t-output"/></svg>
<div class="t" style="left:426px;top:111.0px;height:40px;line-height:40px;letter-spacing:0.6px;transform:scaleX(1.1133);transform-origin:0 50%;">Output</div>
<svg class="ic" style="left:564px;top:110.5px;width:34.5px;height:34.5px;" viewBox="0 0 64 64"><use href="#t-sql"/></svg>
<div class="t" style="left:605.3px;top:111.0px;height:40px;line-height:40px;letter-spacing:0.6px;transform:scaleX(1.0659);transform-origin:0 50%;">Diff preview</div>
<div class="h" style="left:184.5px;top:168.3px;height:40px;line-height:40px;letter-spacing:0.6px;transform:scaleX(1.0186);transform-origin:0 50%;">Diff mode</div>
<div class="h" style="left:805.5px;top:168.3px;height:40px;line-height:40px;letter-spacing:0.35px;">Presets</div>
<div class="h" style="left:1311px;top:168.3px;height:40px;line-height:40px;letter-spacing:0.6px;transform:scaleX(1.0249);transform-origin:0 50%;">Partial diff filters</div>
<div class="h" style="left:184.5px;top:367.90000000000003px;height:40px;line-height:40px;letter-spacing:0.6px;transform:scaleX(1.0869);transform-origin:0 50%;">Input</div>
<div class="h" style="left:184.5px;top:564.0px;height:40px;line-height:40px;letter-spacing:0.6px;transform:scaleX(1.0131);transform-origin:0 50%;">Compare to</div>
<div class="h" style="left:184.5px;top:760.3px;height:40px;line-height:40px;letter-spacing:0.35px;">Code options</div>
<div class="h" style="left:184.5px;top:959.3px;height:40px;line-height:40px;letter-spacing:0.6px;transform:scaleX(1.0107);transform-origin:0 50%;">Diff options</div>
<div class="h" style="left:184.5px;top:1319.7px;height:40px;line-height:40px;letter-spacing:0.6px;transform:scaleX(1.0328);transform-origin:0 50%;">Import options</div>
<div class="h" style="left:748px;top:1319.7px;height:40px;line-height:40px;letter-spacing:0.47px;">Export options</div>
<div class="h" style="left:1311px;top:874.9px;height:40px;line-height:40px;letter-spacing:0.57px;">Filtered objects</div>
<div class="gb" style="left:186.3px;top:208.3px;width:610.7px;height:148.2px;"></div>
<div class="" style="left:200px;top:224.3px;width:144.7px;height:118.69999999999999px;background:#1b72ae;border:2px solid #2a9df4;border-radius:7px"></div>
<svg preserveAspectRatio="none" class="ic" style="left:236px;top:229.5px;width:70px;height:69.5px;" viewBox="0 0 64 64"><use href="#d-dbdb"/></svg>
<div class="t" style="left:72.30000000000001px;width:400px;text-align:center;top:301.5px;height:40px;line-height:40px;letter-spacing:0.6px;">DB <svg width="22.6" height="14" viewBox="0 0 22.6 14" style="vertical-align:1.5px"><path d="M1.5 4.3h11V.3l9 6.7l-9 6.7v-4h-11z" fill="#e1e4ea"/></svg> DB</div>
<svg preserveAspectRatio="none" class="ic" style="left:413px;top:229.5px;width:70px;height:69.5px;" viewBox="0 0 64 64"><use href="#d-mdb"/></svg>
<div class="t" style="left:248.0px;width:400px;text-align:center;top:301.5px;height:40px;line-height:40px;letter-spacing:0.6px;transform:scaleX(1.037);transform-origin:50% 50%;">Model <svg width="22.6" height="14" viewBox="0 0 22.6 14" style="vertical-align:1.5px"><path d="M1.5 4.3h11V.3l9 6.7l-9 6.7v-4h-11z" fill="#e1e4ea"/></svg> DB</div>
<svg preserveAspectRatio="none" class="ic" style="left:632px;top:229.5px;width:70px;height:69.5px;" viewBox="0 0 64 64"><use href="#d-mm"/></svg>
<div class="t" style="left:467.5px;width:400px;text-align:center;top:301.5px;height:40px;line-height:40px;letter-spacing:0.6px;transform:scaleX(1.0624);transform-origin:50% 50%;">Model <svg width="22.6" height="14" viewBox="0 0 22.6 14" style="vertical-align:1.5px"><path d="M1.5 4.3h11V.3l9 6.7l-9 6.7v-4h-11z" fill="#e1e4ea"/></svg> Model</div>
<div class="gb" style="left:807.5px;top:208.3px;width:496.0px;height:148.2px;"></div>
<div class="combo" style="left:821px;top:224.3px;width:469px;height:51.69999999999999px;"></div>
<div class="t" style="left:828.6px;top:231.0px;height:40px;line-height:40px;letter-spacing:0.6px;transform:scaleX(1.0879);transform-origin:0 50%;">Default</div>
<div class="arr" style="left:1260.4px;top:245px;width:18.0px;height:11px;"></div>
<div class="btn" style="left:967.0px;top:284.7px;width:56.700000000000045px;height:57.80000000000001px;"></div>
<svg class="ic" style="left:974.0px;top:292.5px;width:43.0px;height:42.69999999999999px;" viewBox="0 0 64 64"><use href="#p-new"/></svg>
<div class="btn" style="left:1033.43px;top:284.7px;width:56.700000000000045px;height:57.80000000000001px;"></div>
<svg class="ic" style="left:1040.43px;top:292.5px;width:43.0px;height:42.69999999999999px;" viewBox="0 0 64 64"><use href="#p-edit"/></svg>
<div class="btn" style="left:1099.8600000000001px;top:284.7px;width:56.700000000000045px;height:57.80000000000001px;"></div>
<svg class="ic" style="left:1106.8600000000001px;top:292.5px;width:43.0px;height:42.69999999999999px;" viewBox="0 0 64 64"><use href="#p-save"/></svg>
<div class="btn" style="left:1166.29px;top:284.7px;width:56.700000000000045px;height:57.80000000000001px;"></div>
<svg class="ic" style="left:1173.29px;top:292.5px;width:43.0px;height:42.69999999999999px;" viewBox="0 0 64 64"><use href="#p-trash"/></svg>
<div class="btn" style="left:1232.72px;top:284.7px;width:56.700000000000045px;height:57.80000000000001px;"></div>
<svg class="ic" style="left:1239.72px;top:292.5px;width:43.0px;height:42.69999999999999px;" viewBox="0 0 64 64"><use href="#p-refresh"/></svg>
<div class="gb" style="left:186.3px;top:407.7px;width:1117.2px;height:145.59999999999997px;"></div>
<div class="t" style="left:198.8px;top:430.8px;height:40px;line-height:40px;letter-spacing:0.6px;transform:scaleX(1.0558);transform-origin:0 50%;">Connection:</div>
<div class="combo" style="left:368.3px;top:424px;width:920.7px;height:51.60000000000002px;"></div>
<svg class="ic" style="left:380px;top:431px;width:32px;height:37px;" viewBox="0 0 64 64"><use href="#c-server"/></svg>
<div class="t" style="left:417.5px;top:430.8px;height:40px;line-height:40px;letter-spacing:0.6px;transform:scaleX(1.037);transform-origin:0 50%;">local-db (localhost:5432)</div>
<div class="arr" style="left:1260.4px;top:444.5px;width:18.0px;height:11.0px;"></div>
<div class="t" style="left:198.8px;top:493.6px;height:40px;line-height:40px;letter-spacing:0.6px;transform:scaleX(1.0444);transform-origin:0 50%;">Database:</div>
<div class="combo" style="left:368.3px;top:487px;width:920.7px;height:51.39999999999998px;"></div>
<svg preserveAspectRatio="none" class="ic" style="left:380px;top:496px;width:31px;height:33.5px;" viewBox="0 0 64 64"><use href="#c-db"/></svg>
<div class="t" style="left:417.5px;top:493.6px;height:40px;line-height:40px;letter-spacing:0.6px;transform:scaleX(1.0189);transform-origin:0 50%;">demodb</div>
<div class="arr" style="left:1260.4px;top:507.5px;width:18.0px;height:11.0px;"></div>
<div class="gb" style="left:186.3px;top:604.0px;width:1117.2px;height:145.5999999999999px;"></div>
<div class="t" style="left:198.8px;top:627.0999999999999px;height:40px;line-height:40px;letter-spacing:0.6px;transform:scaleX(1.0558);transform-origin:0 50%;">Connection:</div>
<div class="combo" style="left:368.3px;top:620.3px;width:920.7px;height:51.60000000000002px;"></div>
<svg class="ic" style="left:380px;top:627.3px;width:32px;height:37.0px;" viewBox="0 0 64 64"><use href="#c-server"/></svg>
<div class="t" style="left:417.5px;top:627.0999999999999px;height:40px;line-height:40px;letter-spacing:0.6px;transform:scaleX(1.037);transform-origin:0 50%;">local-db (localhost:5432)</div>
<div class="arr" style="left:1260.4px;top:640.8px;width:18.0px;height:11.0px;"></div>
<div class="t" style="left:198.8px;top:689.9px;height:40px;line-height:40px;letter-spacing:0.6px;transform:scaleX(1.0444);transform-origin:0 50%;">Database:</div>
<div class="combo" style="left:368.3px;top:683.3px;width:920.7px;height:51.39999999999998px;"></div>
<svg preserveAspectRatio="none" class="ic" style="left:380px;top:692.3px;width:31px;height:33.5px;" viewBox="0 0 64 64"><use href="#c-db"/></svg>
<div class="t" style="left:417.5px;top:689.9px;height:40px;line-height:40px;letter-spacing:0.6px;transform:scaleX(1.0553);transform-origin:0 50%;">empty_db</div>
<div class="arr" style="left:1260.4px;top:703.8px;width:18.0px;height:11.0px;"></div>
<div class="gb" style="left:186.3px;top:799.3px;width:1117.2px;height:149.70000000000005px;"></div>
<div class="rb" style="left:200.3px;top:833.8px;width:23.0px;height:23.0px;"></div>
<div class="t" style="left:232.8px;top:826.3px;height:40px;line-height:40px;letter-spacing:0.6px;transform:scaleX(1.0152);transform-origin:0 50%;">Store in SQL file:</div>
<div class="dark" style="left:467px;top:817px;width:688px;height:55px;"></div>
<div class="btnd" style="left:1167px;top:817px;width:55px;height:55px;"></div>
<svg class="ic" style="left:1176px;top:826px;width:37px;height:37px;" viewBox="0 0 64 64"><use href="#g-trash"/></svg>
<div class="btnd" style="left:1233.5px;top:817px;width:55.0px;height:55px;"></div>
<svg class="ic" style="left:1242px;top:826px;width:38px;height:37px;" viewBox="0 0 64 64"><use href="#g-folder"/></svg>
<div class="rb on" style="left:200.3px;top:896.9px;width:23.0px;height:23.0px;"></div>
<div class="t" style="left:232.8px;top:889.4px;height:40px;line-height:40px;letter-spacing:0.6px;transform:scaleX(1.0435);transform-origin:0 50%;">Apply on server</div>
<div class="cb" style="left:466px;top:896.4px;width:24px;height:24.0px;"></div>
<div class="t" style="left:498px;top:889.4px;height:40px;line-height:40px;letter-spacing:0.6px;transform:scaleX(1.0079);transform-origin:0 50%;">Use PostgreSQL:</div>
<div class="btnd" style="left:736.4px;top:884.5px;width:103.60000000000002px;height:48.200000000000045px;"></div>
<div class="t dis" style="left:743.4px;top:889.4px;height:40px;line-height:40px;letter-spacing:0.6px;transform:scaleX(1.0251);transform-origin:0 50%;">18.0</div>
<div class="arr" style="left:812px;top:903px;width:18px;height:11px;border-top-color:#5b6473"></div>
<div class="gb" style="left:186.3px;top:999px;width:1117.2px;height:310.5px;"></div>
<div class="cb on" style="left:200px;top:1027.2px;width:24px;height:24.0px;"></div>
<div class="t" style="left:232.2px;top:1020.2px;height:40px;line-height:40px;letter-spacing:0.6px;transform:scaleX(1.0345);transform-origin:0 50%;">Keep cluster objects</div>
<div class="cb on" style="left:200px;top:1083.2px;width:24px;height:24.0px;"></div>
<div class="t" style="left:232.2px;top:1076.2px;height:40px;line-height:40px;letter-spacing:0.6px;transform:scaleX(1.0422);transform-origin:0 50%;">Keep object's permissions</div>
<div class="cb on" style="left:200px;top:1139px;width:24px;height:24px;"></div>
<div class="t" style="left:232.2px;top:1132.0px;height:40px;line-height:40px;letter-spacing:0.6px;transform:scaleX(1.0428);transform-origin:0 50%;">Replace modified objects</div>
<div class="cb on" style="left:200px;top:1195px;width:24px;height:24px;"></div>
<div class="t" style="left:232.2px;top:1188.0px;height:40px;line-height:40px;letter-spacing:0.6px;transform:scaleX(1.0273);transform-origin:0 50%;">Reuse sequences on serial columns</div>
<div class="cb on" style="left:200px;top:1255px;width:24px;height:24px;"></div>
<div class="t" style="left:232.2px;top:1248.0px;height:40px;line-height:40px;letter-spacing:0.6px;transform:scaleX(1.0372);transform-origin:0 50%;">Preserve database name</div>
<div class="cb on" style="left:716.5px;top:1027.2px;width:24.0px;height:24.0px;"></div>
<div class="t" style="left:748px;top:1020.2px;height:40px;line-height:40px;letter-spacing:0.6px;transform:scaleX(1.0449);transform-origin:0 50%;">Drop objects in cascade mode</div>
<div class="cb" style="left:716.5px;top:1083.2px;width:24.0px;height:24.0px;"></div>
<div class="t" style="left:748px;top:1076.2px;height:40px;line-height:40px;letter-spacing:0.6px;transform:scaleX(1.0609);transform-origin:0 50%;">Do not drop missing objects</div>
<div class="cb d" style="left:743px;top:1140px;width:22px;height:22px;width:22px;height:22px"></div>
<div class="t dis" style="left:774.7px;top:1132.0px;height:40px;line-height:40px;letter-spacing:0.6px;transform:scaleX(1.0596);transform-origin:0 50%;">Drop missing columns and constraints</div>
<div class="cb" style="left:716.5px;top:1195px;width:24.0px;height:24px;"></div>
<div class="t" style="left:748px;top:1188.0px;height:40px;line-height:40px;letter-spacing:0.6px;transform:scaleX(1.0503);transform-origin:0 50%;">Recreate unmodifiable objects</div>
<div class="btn" style="left:716px;top:1238.8px;width:352.70000000000005px;height:56.700000000000045px;"></div>
<svg class="ic" style="left:727px;top:1243.5px;width:40px;height:46.5px;" viewBox="0 0 64 64"><use href="#f-funnel"/></svg>
<div class="t" style="left:770.8px;top:1248.5px;height:40px;line-height:40px;letter-spacing:0.6px;transform:scaleX(1.0243);transform-origin:0 50%;">Force re-creation (0)</div>
<div class="arr" style="left:1048.5px;top:1277.5px;width:11.0px;height:6.5px;border-left-width:5.5px;border-right-width:5.5px;border-top-width:6.5px"></div>
<div class="gb" style="left:186.3px;top:1360px;width:554.0px;height:250px;"></div>
<div class="cb" style="left:200px;top:1388px;width:24px;height:24px;"></div>
<div class="t" style="left:230.3px;top:1381.0px;height:40px;line-height:40px;letter-spacing:0.6px;transform:scaleX(1.0743);transform-origin:0 50%;">Import system objects</div>
<div class="cb" style="left:200px;top:1443.8px;width:24px;height:24.0px;"></div>
<div class="t" style="left:230.3px;top:1436.8px;height:40px;line-height:40px;letter-spacing:0.6px;transform:scaleX(1.076);transform-origin:0 50%;">Import extension objects</div>
<div class="cb" style="left:200px;top:1500px;width:24px;height:24px;"></div>
<div class="t" style="left:230.3px;top:1493.0px;height:40px;line-height:40px;letter-spacing:0.6px;transform:scaleX(1.1023);transform-origin:0 50%;">Ignore import errors</div>
<div class="cb" style="left:200px;top:1556px;width:24px;height:24px;"></div>
<div class="t" style="left:230.3px;top:1549.0px;height:40px;line-height:40px;letter-spacing:0.6px;transform:scaleX(1.0775);transform-origin:0 50%;">Debug mode</div>
<div class="gb" style="left:749px;top:1360px;width:554.5px;height:250px;"></div>
<div class="cb on" style="left:763.3px;top:1388px;width:24.0px;height:24px;"></div>
<div class="t" style="left:795.3px;top:1381.0px;height:40px;line-height:40px;letter-spacing:0.6px;transform:scaleX(1.0519);transform-origin:0 50%;">Run in a transaction</div>
<div class="cb" style="left:763.3px;top:1443.8px;width:24.0px;height:24.0px;"></div>
<div class="t" style="left:795.3px;top:1436.8px;height:40px;line-height:40px;letter-spacing:0.6px;transform:scaleX(1.0814);transform-origin:0 50%;">Ignore duplicity errors</div>
<div class="cb" style="left:763.3px;top:1500px;width:24.0px;height:24px;"></div>
<div class="t" style="left:795.3px;top:1493.0px;height:40px;line-height:40px;letter-spacing:0.6px;transform:scaleX(1.0714);transform-origin:0 50%;">Ignore error codes</div>
<div class="dark" style="left:764.8px;top:1545.6px;width:523.0px;height:48.40000000000009px;"></div>
<div class="gb" style="left:1313px;top:208px;width:695px;height:658px;"></div>
<div class="btn" style="left:1327px;top:224.8px;width:121px;height:54.5px;"></div>
<svg class="ic" style="left:1336px;top:232px;width:42px;height:41px;" viewBox="0 0 64 64"><use href="#f-add"/></svg>
<div class="t" style="left:1382.5px;top:233.0px;height:40px;line-height:40px;letter-spacing:0.6px;transform:scaleX(1.0581);transform-origin:0 50%;">Add</div>
<div class="btnd" style="left:1459.3px;top:224.8px;width:173.70000000000005px;height:54.5px;"></div>
<svg class="ic" style="left:1470px;top:233px;width:40px;height:39px;" viewBox="0 0 64 64"><use href="#f-clear"/></svg>
<div class="t dis" style="left:1514px;top:233.0px;height:40px;line-height:40px;letter-spacing:0.6px;transform:scaleX(1.0157);transform-origin:0 50%;">Clear all</div>
<div class="btn" style="left:1643.4px;top:224.8px;width:195.19999999999982px;height:54.5px;"></div>
<svg class="ic" style="left:1654.5px;top:232px;width:41.0px;height:40px;" viewBox="0 0 64 64"><use href="#t-settings"/></svg>
<div class="t" style="left:1700px;top:233.0px;height:40px;line-height:40px;letter-spacing:0.6px;transform:scaleX(1.0867);transform-origin:0 50%;">Options</div>
<div class="arr" style="left:1819px;top:262px;width:11px;height:6.5px;border-left-width:5.5px;border-right-width:5.5px;border-top-width:6.5px"></div>
<div class="btnd" style="left:1849px;top:224.8px;width:145px;height:54.5px;"></div>
<svg class="ic" style="left:1859px;top:234px;width:40px;height:36px;" viewBox="0 0 64 64"><use href="#f-check"/></svg>
<div class="t dis" style="left:1903.5px;top:233.0px;height:40px;line-height:40px;letter-spacing:0.6px;transform:scaleX(1.0483);transform-origin:0 50%;">Apply</div>
<div class="" style="left:1327px;top:289.3px;width:667px;height:378.7px;background:#171b27;border:1px solid #2b3146"></div>
<div class="" style="left:1327px;top:289.3px;width:667px;height:46.69999999999999px;background:#373e58;border:1px solid #2b3146"></div>
<div class="" style="left:1555px;top:291px;width:1.5px;height:44px;background:#2b3146"></div>
<div class="" style="left:1730px;top:291px;width:1.5px;height:44px;background:#2b3146"></div>
<div class="" style="left:1905.5px;top:291px;width:1.5px;height:44px;background:#2b3146"></div>
<svg preserveAspectRatio="none" class="ic" style="left:1332px;top:297px;width:35px;height:33px;" viewBox="0 0 64 64"><use href="#f-object"/></svg>
<div class="t" style="left:1371px;top:294.5px;height:40px;line-height:40px;letter-spacing:0.6px;transform:scaleX(1.0525);transform-origin:0 50%;">Object</div>
<svg class="ic" style="left:1559px;top:296px;width:35px;height:35px;" viewBox="0 0 64 64"><use href="#f-pattern"/></svg>
<div class="t" style="left:1598px;top:294.5px;height:40px;line-height:40px;letter-spacing:0.6px;transform:scaleX(1.0947);transform-origin:0 50%;">Pattern</div>
<svg class="ic" style="left:1735px;top:295px;width:31px;height:36px;" viewBox="0 0 64 64"><use href="#f-funnel2"/></svg>
<div class="t" style="left:1773.5px;top:294.5px;height:40px;line-height:40px;letter-spacing:0.6px;transform:scaleX(1.1016);transform-origin:0 50%;">Matching</div>
<div class="" style="left:1327px;top:677.5px;width:667.5px;height:174.0px;background:#4b7593;border:2px solid #4fc8f0;border-radius:7px"></div>
<svg class="ic" style="left:1339px;top:742px;width:45px;height:45px;" viewBox="0 0 64 64"><use href="#f-info"/></svg>
<div class="t" style="left:1393px;top:689.0px;height:40px;line-height:40px;color:#e6edf3letter-spacing:0.6px;transform:scaleX(1.0572);transform-origin:0 50%;">Using a pattern in <b>wildcard</b> mode where no</div>
<div class="t" style="left:1393px;top:727.3px;height:40px;line-height:40px;color:#e6edf3letter-spacing:0.6px;transform:scaleX(1.0461);transform-origin:0 50%;">wildcard character <b>*</b> is present has the same</div>
<div class="t" style="left:1393px;top:765.6px;height:40px;line-height:40px;color:#e6edf3letter-spacing:0.6px;transform:scaleX(1.0519);transform-origin:0 50%;">effect as performing an exact match search</div>
<div class="t" style="left:1393px;top:803.9px;height:40px;line-height:40px;color:#e6edf3letter-spacing:0.6px;transform:scaleX(1.0575);transform-origin:0 50%;">on the names or signatures.</div>
<div class="" style="left:1640.7px;top:867.6px;width:36.299999999999955px;height:3.6000000000000227px;background:#1b72ae"></div>
<div class="" style="left:1306px;top:871px;width:5px;height:36px;background:#1b72ae"></div>
<div class="" style="left:2031px;top:843.5px;width:4.5px;height:34.5px;background:#1b72ae"></div>
<div class="gb" style="left:1314px;top:914.7px;width:694px;height:699.8px;"></div>
<div class="" style="left:1327px;top:931.7px;width:666.5px;height:668.5999999999999px;background:#171b27;border:1px solid #2b3146"></div>
<div class="" style="left:2037px;top:89.3px;width:215px;height:69.50000000000001px;background:#3a415a;border:2px solid #414a66;border-radius:9px"></div>
<svg preserveAspectRatio="none" class="ic" style="left:2047.5px;top:100px;width:49.5px;height:48.5px;" viewBox="0 0 64 64"><use href="#s-diff"/></svg>
<div class="t" style="left:2099.8px;top:104.7px;height:40px;line-height:40px;font-size:32px;letter-spacing:0.36px;">Generate</div>
<div class="" style="left:2038px;top:168.6px;width:213.5px;height:68.4px;background:#232838;border:2px solid #2c3247;border-radius:9px"></div>
<svg class="ic" style="left:2069px;top:181px;width:45px;height:45px;" viewBox="0 0 64 64"><use href="#f-cancel"/></svg>
<div class="t dis" style="left:2118.7px;top:183.5px;height:40px;line-height:40px;font-size:32px;color:#555d6c;letter-spacing:-0.4px;">Cancel</div>
<div class="" style="left:2262px;top:90px;width:1573.5px;height:1390px;background:#323a4f"></div>
<div class="" style="left:2266px;top:95px;width:1557px;height:1380px;background:#161b27"></div>
<div class="" style="left:2266px;top:95px;width:82px;height:1356px;background:#222736"></div>
<div class="" style="left:3798px;top:95px;width:25px;height:1356px;background:#2a2f42;border:1.5px solid #3f4762"></div>
<div class="" style="left:3798px;top:95px;width:25px;height:26.5px;background:#3a415a;border:1.5px solid #3f4762"></div>
<div class="" style="left:3801.5px;top:102.5px;width:18.0px;height:11.5px;width:0;height:0;border-left:9px solid transparent;border-right:9px solid transparent;border-bottom:11.5px solid #e3e5ea"></div>
<div class="" style="left:3798px;top:145px;width:25px;height:130px;background:#3a415a;border:1.5px solid #434b67;border-radius:4px"></div>
<div class="" style="left:3798px;top:1424.5px;width:25px;height:26.5px;background:#3a415a;border:1.5px solid #3f4762"></div>
<div class="" style="left:3801.5px;top:1432.5px;width:18.0px;height:11.5px;width:0;height:0;border-left:9px solid transparent;border-right:9px solid transparent;border-top:11.5px solid #e3e5ea"></div>
<div class="" style="left:2266px;top:1451px;width:1532px;height:24.5px;background:#2a2f42;border:1.5px solid #3f4762"></div>
<div class="" style="left:2266px;top:1451px;width:26px;height:24.5px;background:#3a415a;border:1.5px solid #3f4762"></div>
<div class="" style="left:2273px;top:1455px;width:11px;height:16px;width:0;height:0;border-top:8px solid transparent;border-bottom:8px solid transparent;border-right:11px solid #e3e5ea"></div>
<div class="" style="left:2292px;top:1451px;width:1421px;height:24.5px;background:#3a415a;border:1.5px solid #434b67;border-radius:4px"></div>
<div class="" style="left:3773px;top:1451px;width:25px;height:24.5px;background:#3a415a;border:1.5px solid #3f4762"></div>
<div class="" style="left:3780px;top:1455px;width:11px;height:16px;width:0;height:0;border-top:8px solid transparent;border-bottom:8px solid transparent;border-left:11px solid #e3e5ea"></div>
<div class="" style="left:3798px;top:1451px;width:25px;height:24.5px;background:#141a24"></div>
<div class="m" style="left:2266.0px;width:82px;text-align:center;top:98.2px;height:36px;line-height:36px;color:#eceae4;">8</div>
<div class="m" style="left:2354.5px;top:98.2px;height:36px;line-height:36px;color:#e4e4e4;"><i class="c">-- ** [ Diff summary ]</i></div>
<div class="m" style="left:2266.0px;width:82px;text-align:center;top:134.94px;height:36px;line-height:36px;color:#eceae4;">9</div>
<div class="m" style="left:2354.5px;top:134.94px;height:36px;line-height:36px;color:#e4e4e4;"><i class="c">-- ** Dropped objects: 3</i></div>
<div class="m" style="left:2266.0px;width:82px;text-align:center;top:171.68px;height:36px;line-height:36px;color:#eceae4;">10</div>
<div class="m" style="left:2354.5px;top:171.68px;height:36px;line-height:36px;color:#e4e4e4;"><i class="c">-- ** Created objects: 29</i></div>
<div class="m" style="left:2266.0px;width:82px;text-align:center;top:208.42000000000002px;height:36px;line-height:36px;color:#eceae4;">11</div>
<div class="m" style="left:2354.5px;top:208.42000000000002px;height:36px;line-height:36px;color:#e4e4e4;"><i class="c">-- ** Changed objects: 0</i></div>
<div class="m" style="left:2266.0px;width:82px;text-align:center;top:245.16000000000003px;height:36px;line-height:36px;color:#eceae4;">12</div>
<div class="m" style="left:2266.0px;width:82px;text-align:center;top:281.90000000000003px;height:36px;line-height:36px;color:#eceae4;">13</div>
<div class="m" style="left:2354.5px;top:281.90000000000003px;height:36px;line-height:36px;color:#e4e4e4;"><b class="k">SET</b> <span class="i">check_function_bodies</span> = <b class="k">false</b>;</div>
<div class="m" style="left:2266.0px;width:82px;text-align:center;top:318.64px;height:36px;line-height:36px;color:#eceae4;">14</div>
<div class="m" style="left:2354.5px;top:318.64px;height:36px;line-height:36px;color:#e4e4e4;"><i class="c">-- ddl-end --</i></div>
<div class="m" style="left:2266.0px;width:82px;text-align:center;top:355.38px;height:36px;line-height:36px;color:#eceae4;">15</div>
<div class="m" style="left:2266.0px;width:82px;text-align:center;top:392.12px;height:36px;line-height:36px;color:#eceae4;">16</div>
<div class="m" style="left:2354.5px;top:392.12px;height:36px;line-height:36px;color:#e4e4e4;"><b class="k">SET</b> <span class="i">search_path</span>=<b class="k">public</b>,<span class="i">pg_catalog</span>,<span class="i">schema_a</span>,<span class="i">schema_b</span>;</div>
<div class="m" style="left:2266.0px;width:82px;text-align:center;top:428.86px;height:36px;line-height:36px;color:#eceae4;">17</div>
<div class="m" style="left:2354.5px;top:428.86px;height:36px;line-height:36px;color:#e4e4e4;"><i class="c">-- ddl-end --</i></div>
<div class="m" style="left:2266.0px;width:82px;text-align:center;top:465.6px;height:36px;line-height:36px;color:#eceae4;">18</div>
<div class="m" style="left:2266.0px;width:82px;text-align:center;top:502.34000000000003px;height:36px;line-height:36px;color:#eceae4;">19</div>
<div class="m" style="left:2266.0px;width:82px;text-align:center;top:539.08px;height:36px;line-height:36px;color:#eceae4;">20</div>
<div class="m" style="left:2354.5px;top:539.08px;height:36px;line-height:36px;color:#e4e4e4;"><i class="c">-- ** [ Dropped objects ]</i></div>
<div class="m" style="left:2266.0px;width:82px;text-align:center;top:575.82px;height:36px;line-height:36px;color:#eceae4;">21</div>
<div class="m" style="left:2266.0px;width:82px;text-align:center;top:612.5600000000001px;height:36px;line-height:36px;color:#eceae4;">22</div>
<div class="m" style="left:2354.5px;top:612.5600000000001px;height:36px;line-height:36px;color:#e4e4e4;"><b class="k">DROP VIEW IF EXISTS public</b>.<span class="i">vw_person</span> <b class="k">CASCADE</b>;</div>
<div class="m" style="left:2266.0px;width:82px;text-align:center;top:649.3000000000001px;height:36px;line-height:36px;color:#eceae4;">23</div>
<div class="m" style="left:2354.5px;top:649.3000000000001px;height:36px;line-height:36px;color:#e4e4e4;"><i class="c">-- ddl-end --</i></div>
<div class="m" style="left:2266.0px;width:82px;text-align:center;top:686.0400000000001px;height:36px;line-height:36px;color:#eceae4;">24</div>
<div class="m" style="left:2354.5px;top:686.0400000000001px;height:36px;line-height:36px;color:#e4e4e4;"><b class="k">DROP FUNCTION IF EXISTS public</b>.<span class="i">combine_two_strings</span>(<b class="ty"><i>text</i></b>,<b class="ty"><i>text</i></b>) <b class="k">CASCADE</b>;</div>
<div class="m" style="left:2266.0px;width:82px;text-align:center;top:722.7800000000001px;height:36px;line-height:36px;color:#eceae4;">25</div>
<div class="m" style="left:2354.5px;top:722.7800000000001px;height:36px;line-height:36px;color:#e4e4e4;"><i class="c">-- ddl-end --</i></div>
<div class="m" style="left:2266.0px;width:82px;text-align:center;top:759.5200000000001px;height:36px;line-height:36px;color:#eceae4;">26</div>
<div class="m" style="left:2354.5px;top:759.5200000000001px;height:36px;line-height:36px;color:#e4e4e4;"><b class="k">DROP TABLE IF EXISTS public</b>.<span class="i">person</span> <b class="k">CASCADE</b>;</div>
<div class="m" style="left:2266.0px;width:82px;text-align:center;top:796.2600000000001px;height:36px;line-height:36px;color:#eceae4;">27</div>
<div class="m" style="left:2354.5px;top:796.2600000000001px;height:36px;line-height:36px;color:#e4e4e4;"><i class="c">-- ddl-end --</i></div>
<div class="m" style="left:2266.0px;width:82px;text-align:center;top:833.0000000000001px;height:36px;line-height:36px;color:#eceae4;">28</div>
<div class="m" style="left:2266.0px;width:82px;text-align:center;top:869.7400000000001px;height:36px;line-height:36px;color:#eceae4;">29</div>
<div class="m" style="left:2266.0px;width:82px;text-align:center;top:906.4800000000001px;height:36px;line-height:36px;color:#eceae4;">30</div>
<div class="m" style="left:2354.5px;top:906.4800000000001px;height:36px;line-height:36px;color:#e4e4e4;"><i class="c">-- ** [ Created objects ]</i></div>
<div class="m" style="left:2266.0px;width:82px;text-align:center;top:943.2200000000001px;height:36px;line-height:36px;color:#eceae4;">31</div>
<div class="m" style="left:2266.0px;width:82px;text-align:center;top:979.96px;height:36px;line-height:36px;color:#eceae4;">32</div>
<div class="m" style="left:2354.5px;top:979.96px;height:36px;line-height:36px;color:#e4e4e4;"><i class="c">-- object: schema_a | type: SCHEMA --</i></div>
<div class="m" style="left:2266.0px;width:82px;text-align:center;top:1016.7px;height:36px;line-height:36px;color:#eceae4;">33</div>
<div class="m" style="left:2354.5px;top:1016.7px;height:36px;line-height:36px;color:#e4e4e4;"><i class="c">-- DROP SCHEMA IF EXISTS schema_a CASCADE;</i></div>
<div class="m" style="left:2266.0px;width:82px;text-align:center;top:1053.44px;height:36px;line-height:36px;color:#eceae4;">34</div>
<div class="m" style="left:2354.5px;top:1053.44px;height:36px;line-height:36px;color:#e4e4e4;"><b class="k">CREATE SCHEMA</b> <span class="i">schema_a</span>;</div>
<div class="m" style="left:2266.0px;width:82px;text-align:center;top:1090.18px;height:36px;line-height:36px;color:#eceae4;">35</div>
<div class="m" style="left:2354.5px;top:1090.18px;height:36px;line-height:36px;color:#e4e4e4;"><i class="c">-- ddl-end --</i></div>
<div class="m" style="left:2266.0px;width:82px;text-align:center;top:1126.92px;height:36px;line-height:36px;color:#eceae4;">36</div>
<div class="m" style="left:2354.5px;top:1126.92px;height:36px;line-height:36px;color:#e4e4e4;"><b class="k">ALTER SCHEMA</b> <span class="i">schema_a</span> <b class="k">OWNER TO</b> <span class="i">postgres</span>;</div>
<div class="m" style="left:2266.0px;width:82px;text-align:center;top:1163.66px;height:36px;line-height:36px;color:#eceae4;">37</div>
<div class="m" style="left:2354.5px;top:1163.66px;height:36px;line-height:36px;color:#e4e4e4;"><i class="c">-- ddl-end --</i></div>
<div class="m" style="left:2266.0px;width:82px;text-align:center;top:1200.4px;height:36px;line-height:36px;color:#eceae4;">38</div>
<div class="m" style="left:2266.0px;width:82px;text-align:center;top:1237.14px;height:36px;line-height:36px;color:#eceae4;">39</div>
<div class="m" style="left:2354.5px;top:1237.14px;height:36px;line-height:36px;color:#e4e4e4;"><i class="c">-- object: schema_b | type: SCHEMA --</i></div>
<div class="m" style="left:2266.0px;width:82px;text-align:center;top:1273.88px;height:36px;line-height:36px;color:#eceae4;">40</div>
<div class="m" style="left:2354.5px;top:1273.88px;height:36px;line-height:36px;color:#e4e4e4;"><i class="c">-- DROP SCHEMA IF EXISTS schema_b CASCADE;</i></div>
<div class="m" style="left:2266.0px;width:82px;text-align:center;top:1310.6200000000001px;height:36px;line-height:36px;color:#eceae4;">41</div>
<div class="m" style="left:2354.5px;top:1310.6200000000001px;height:36px;line-height:36px;color:#e4e4e4;"><b class="k">CREATE SCHEMA</b> <span class="i">schema_b</span>;</div>
<div class="m" style="left:2266.0px;width:82px;text-align:center;top:1347.3600000000001px;height:36px;line-height:36px;color:#eceae4;">42</div>
<div class="m" style="left:2354.5px;top:1347.3600000000001px;height:36px;line-height:36px;color:#e4e4e4;"><i class="c">-- ddl-end --</i></div>
<div class="m" style="left:2266.0px;width:82px;text-align:center;top:1384.1000000000001px;height:36px;line-height:36px;color:#eceae4;">43</div>
<div class="m" style="left:2354.5px;top:1384.1000000000001px;height:36px;line-height:36px;color:#e4e4e4;"><b class="k">ALTER SCHEMA</b> <span class="i">schema_b</span> <b class="k">OWNER TO</b> <span class="i">postgres</span>;</div>
<div class="m" style="left:2266.0px;width:82px;text-align:center;top:1420.8400000000001px;height:36px;line-height:36px;color:#eceae4;">44</div>
<div class="m" style="left:2354.5px;top:1420.8400000000001px;height:36px;line-height:36px;color:#e4e4e4;"><i class="c">-- ddl-end --</i></div></body></html>
